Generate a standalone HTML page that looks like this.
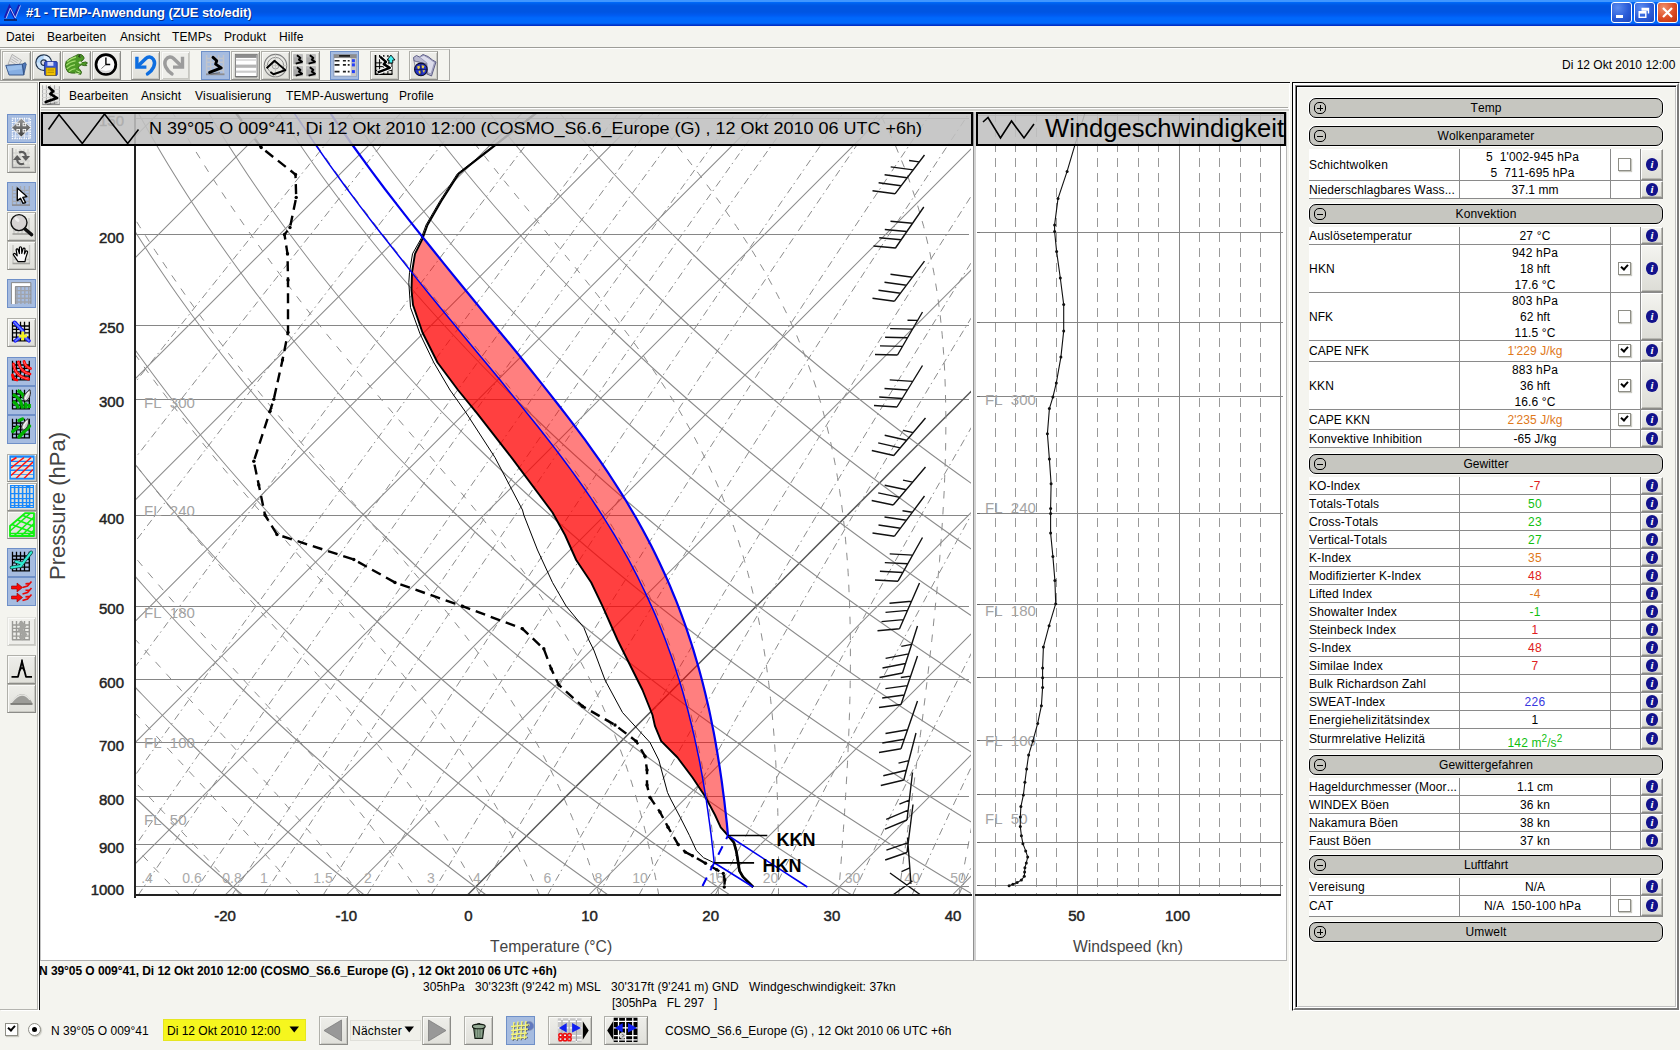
<!DOCTYPE html>
<html lang="de"><head><meta charset="utf-8"><title>#1 - TEMP-Anwendung (ZUE sto/edit)</title>
<style>
html,body{margin:0;padding:0;background:#f4f4ef;}
body{width:1680px;height:1050px;overflow:hidden;font-family:"Liberation Sans",sans-serif;font-size:12px;color:#000;font-kerning:none;}
#root{position:relative;width:1680px;height:1050px;background:#f4f4ef;overflow:hidden;}
.a{position:absolute;}
.t{position:absolute;white-space:nowrap;line-height:14px;}
#title{left:0;top:0;width:1680px;height:26px;background:linear-gradient(to bottom,#4096ff 0,#4096ff 1.5px,#0068f8 2.5px,#005ee9 4px,#0055e2 6px,#0055e2 12px,#005af0 15px,#0068fc 18px,#0068fc 23px,#0058e8 24px,#0030c8 25px,#0030c8 26px);}
#title .tt{left:26px;top:5px;color:#fff;font-weight:bold;font-size:13px;line-height:16px;text-shadow:1px 1px 0 #0a2a80;letter-spacing:-0.1px;}
.wb{position:absolute;top:2px;width:19px;height:19px;border:1px solid #fff;border-radius:3px;background:radial-gradient(circle at 30% 25%,#5c8cf0 0,#2a5cd8 55%,#1c46bc 100%);}
.wb.x{background:radial-gradient(circle at 30% 25%,#f0906c 0,#dc4c24 55%,#b83010 100%);}
#menubar{left:0;top:26px;width:1680px;height:21px;border-bottom:1px solid #9d9d98;}
.mi{position:absolute;top:4px;line-height:14px;font-size:12px;white-space:nowrap;letter-spacing:0.12px;}
.btn{position:absolute;width:27px;height:27px;border:1px solid;border-color:#b0b0aa #8c8c88 #8c8c88 #b0b0aa;background:linear-gradient(to bottom,#eeeeea,#e0e0da);box-shadow:inset 1px 1px 0 #fafaf8,inset -1px -1px 0 #c8c8c2;}
.btn.on{background:#a6bce0;border-color:#6f90c8;box-shadow:none;}
.btn.dis{border-color:#e4e4e0 #cfcfca #cfcfca #e4e4e0;background:#eeeeea;}
.btn svg{position:absolute;left:0;top:0;}
#tbframe{left:0;top:49px;width:448px;height:30px;border-top:1px solid #c4c4be;border-right:1px solid #a8a8a4;border-bottom:1px solid #a0a09c;border-left:1px solid #a8a8a4;}
#leftbar{left:0;top:82px;width:37px;height:926px;border-right:1px solid #b4b4b0;border-bottom:1px solid #b4b4b0;border-top:1px solid #b4b4b0;box-shadow:1px 1px 0 #fff;}
#main{left:39px;top:82px;width:1251px;height:928px;border-left:1px solid #111;border-top:1px solid #111;box-sizing:border-box;}
#innermenu{left:41px;top:84px;width:1247px;height:23px;border-bottom:1px solid #a8a8a4;}
#plot1{left:40px;top:112px;border-left:1px solid #c4c4c4;width:932px;height:848px;background:#fff;border-bottom:1px solid #b0b0b0;border-right:1px solid #909090;box-sizing:content-box;}
#plot2{left:974px;top:112px;width:310px;height:848px;background:#fff;border-bottom:1px solid #b0b0b0;border-right:1px solid #b8b8b8;border-left:2px solid #d2d2d2;box-sizing:content-box;}
/* right panel */
#rp{left:1292px;top:82px;width:388px;height:929px;box-sizing:border-box;border-top:1px solid #000;border-left:1px solid #000;border-right:1px solid #fff;border-bottom:1px solid #fff;}
#rp1{left:0;top:0;width:386px;height:927px;box-sizing:border-box;border-top:2px solid #fff;border-left:2px solid #fff;border-right:2px solid #7a7a7a;border-bottom:2px solid #7a7a7a;}
#rp2{left:0;top:0;width:382px;height:923px;box-sizing:border-box;border-top:1px solid #808080;border-left:1px solid #808080;border-right:1px solid #fff;border-bottom:1px solid #fff;}
#rp2b{left:0;top:0;width:380px;height:921px;box-sizing:border-box;border-top:1px solid #000;border-left:1px solid #000;}
#rp3{left:0;top:0;width:379px;height:920px;box-sizing:border-box;border-top:1px solid #fff;border-left:1px solid #fff;border-right:1px solid #c0c0c0;border-bottom:1px solid #c0c0c0;}
.sec{position:absolute;left:1309px;width:354px;height:20px;box-sizing:border-box;border:1px solid #000;border-radius:7px;background:#c6c6c0;box-shadow:0 0 0 1px #fff;text-align:center;line-height:19px;font-size:12px;}
.sec i{position:absolute;left:4px;top:3px;width:10px;height:10px;border:1px solid #000;border-radius:5px;}
.sec i:before{content:"";position:absolute;left:2px;top:4.5px;width:6px;height:1px;background:#000;}
.sec i.p:after{content:"";position:absolute;left:4.5px;top:2px;width:1px;height:6px;background:#000;}
.row{position:absolute;left:1309px;width:354px;background:#fff;border-bottom:1px solid #8a8a8a;box-sizing:border-box;}
.row .l{position:absolute;left:0;top:0;bottom:0;width:150px;border-right:1px solid #8a8a8a;white-space:nowrap;overflow:hidden;}
.row .l span{position:absolute;left:0;top:50%;margin-top:-7px;line-height:14px;}
.row .v{position:absolute;left:151px;top:0;bottom:0;width:150px;border-right:1px solid #8a8a8a;text-align:center;white-space:nowrap;}
.row .v span{display:block;line-height:16px;}
.row .c{position:absolute;left:302px;top:0;bottom:0;width:29px;border-right:1px solid #8a8a8a;}
.row .b{position:absolute;left:332px;top:0;bottom:0;width:22px;box-sizing:border-box;background:linear-gradient(to bottom,#f4f4f0,#dcdcd6);border:1px solid;border-color:#fff #8c8c88 #8c8c88 #fff;box-shadow:inset -1px -1px 0 #b8b8b2;}
.row .b:after{content:"";position:absolute;left:4px;top:50%;margin-top:-7px;width:12px;height:13px;border-radius:6px;background:#12128c;}
.row .b em{position:absolute;left:4px;top:50%;margin-top:-7px;width:12px;height:13px;z-index:2;color:#fff;font:italic bold 11px/13px "Liberation Serif",serif;text-align:center;}
.cb{position:absolute;width:11px;height:11px;border:1px solid #8e8e86;background:#fff;box-shadow:1px 1px 1px #c8c8c0;}
.cb.k:after{content:"";position:absolute;left:2px;top:1px;width:5px;height:3px;border-left:2px solid #000;border-bottom:2px solid #000;transform:rotate(-48deg);}
.or{color:#e0781a}.rd{color:#e02020}.gn{color:#10c010}.bl{color:#3838e0}

</style></head>
<body>
<div id="root">
<!-- title bar -->
<div id="title" class="a">
<svg class="a" style="left:2px;top:3px" width="22" height="20" viewBox="0 0 22 20"><path d="M3 15 L7.5 4 L12.5 14 L17.5 2" stroke="#1a1ab0" stroke-width="2.6" fill="none"/><path d="M4 15.5 L8.3 5 L13.3 15 L18.5 2.5" stroke="#c8d4ff" stroke-width="0.9" fill="none"/><path d="M2 17 H15" stroke="#101040" stroke-width="1.4"/></svg>
<div class="t tt">#1 - TEMP-Anwendung (ZUE sto/edit)</div>
<div class="wb" style="left:1611px"><svg width="19" height="19"><rect x="4" y="12" width="7" height="3" fill="#fff"/></svg></div>
<div class="wb" style="left:1634px"><svg width="19" height="19"><path d="M6.5 5.5 H13.5 V10.5 M6.5 7 H13.5" stroke="#fff" stroke-width="1.4" fill="none"/><rect x="4.2" y="8.7" width="6.6" height="5.6" stroke="#fff" stroke-width="1.4" fill="none"/><path d="M4.2 9.8 H10.8" stroke="#fff" stroke-width="1.6"/></svg></div>
<div class="wb x" style="left:1657px"><svg width="19" height="19"><path d="M5 5 L14 14 M14 5 L5 14" stroke="#fff" stroke-width="2.2" fill="none"/></svg></div>
</div>
<!-- menu bar -->
<div id="menubar" class="a">
<span class="mi" style="left:6px">Datei</span><span class="mi" style="left:47px">Bearbeiten</span><span class="mi" style="left:120px">Ansicht</span><span class="mi" style="left:172px">TEMPs</span><span class="mi" style="left:224px">Produkt</span><span class="mi" style="left:279px">Hilfe</span>
</div>
<div class="a" style="left:0;top:48px;width:1680px;height:1px;background:#fff"></div>
<!-- toolbar -->
<div id="tbframe" class="a"></div>
<div class="btn " style="left:2px;top:51px;width:27px;height:27px"><svg width="27" height="27" viewBox="0 0 27 27"><path d="M9.1 2.4 L18.5 8.4 L15.5 13.5 L5 12.3Z" fill="#e4e4e4" stroke="#9a9a9a" stroke-width="0.7"/><path d="M9.3 5 L15.5 9 M8.3 7 L14.5 11 M7.3 9 L13 12.6" stroke="#b4b4b4" stroke-width="0.9"/><path d="M19.25 12.1 L22.25 10.6 L23.2 12.3 L20.75 23Z" fill="#5078b8" stroke="#2c4c80" stroke-width="0.8"/><path d="M2.75 13.4 L19.25 12.1 L20.75 23 L6.1 23Z" fill="#86aee2" stroke="#2c4c80" stroke-width="0.9"/><path d="M4 14.4 L18.4 13.2 L19 17 L5 19Z" fill="#a4c6f0" opacity="0.7"/></svg></div>
<div class="btn " style="left:32px;top:51px;width:27px;height:27px"><svg width="27" height="27" viewBox="0 0 27 27"><circle cx="10.7" cy="10.6" r="7.8" fill="#b4d6f8" stroke="#22344c" stroke-width="1.3"/><path d="M10.7 3.4 A7.2 7.2 0 0 1 17.9 10.6 L10.7 10.6Z" fill="#e8f4ff" opacity="0.9"/><path d="M10.7 17.8 A7.2 7.2 0 0 1 3.5 10.6 L10.7 10.6Z" fill="#dcecfc" opacity="0.7"/><circle cx="10.7" cy="10.6" r="2.8" fill="#d8d8e0" stroke="#22344c" stroke-width="1.2"/><rect x="11.6" y="9.6" width="12.6" height="13.8" rx="1" fill="#3858d0" stroke="#1c2c90" stroke-width="0.9"/><rect x="14.4" y="9.9" width="6" height="3.9" fill="#d4d8fa"/><rect x="13" y="15.9" width="9.4" height="7.4" fill="#f2c200" stroke="#9a7800" stroke-width="0.6"/><path d="M14.5 18H21M14.5 20.3H21" stroke="#b08c00" stroke-width="1"/></svg></div>
<div class="btn " style="left:62px;top:51px;width:27px;height:27px"><svg width="27" height="27" viewBox="0 0 27 27"><polygon points="12.2,3.9 15.2,2.4 18.2,2.6 20.0,3.9 21.2,6.1 19.7,8.4 17.8,9.5 19.7,10.6 22.7,9.9 24.5,11.0 22.7,12.1 23.8,13.6 21.2,13.6 18.5,12.9 16.7,13.6 15.2,15.9 17.0,17.8 18.5,20.0 17.8,22.3 15.2,21.9 14.4,20.4 12.2,21.1 8.4,21.1 5.0,20.0 3.2,17.0 2.4,13.3 3.2,9.5 5.4,7.3 8.4,5.8" fill="#4e9a26" stroke="#2a5c0e" stroke-width="0.9" stroke-linejoin="round"/><path d="M4.2 9.5 C7 7 10 5.6 13 5 M3.4 13.2 C6 10.6 9 9.2 12.6 8.8 M3.8 16.8 C6.5 14.2 9 13 12 12.6 M6 19.4 C8 17.6 10 16.8 12.4 16.6" stroke="#a4dc70" stroke-width="1.3" fill="none"/><circle cx="16.8" cy="4.2" r="1.3" fill="#16300a"/><circle cx="17.2" cy="3.9" r="0.5" fill="#e8f8d0"/><ellipse cx="17.2" cy="10.6" rx="1.5" ry="1.2" fill="#e8f4d8"/><path d="M12 21 L16.4 21.8 M13.4 18.6 L17.4 20.4" stroke="#b8e890" stroke-width="1"/></svg></div>
<div class="btn " style="left:92px;top:51px;width:27px;height:27px"><svg width="27" height="27" viewBox="0 0 27 27"><circle cx="13.6" cy="13.2" r="10.4" fill="#000" opacity="0.35"/><circle cx="12.9" cy="12.5" r="9.9" fill="#fbfbfb" stroke="#000" stroke-width="2.7"/><path d="M5 16 A8.6 8.6 0 0 0 20.8 16 A12 12 0 0 1 5 16Z" fill="#d8d8d8"/><path d="M12.9 5.6 V12.5 H17.2" stroke="#000" stroke-width="1.4" fill="none"/><path d="M12.9 12.5 L8.4 16.6" stroke="#555" stroke-width="0.8"/></svg></div>
<div class="btn " style="left:131px;top:51px;width:27px;height:27px"><svg width="27" height="27" viewBox="0 0 27 27"><path d="M15.5 21.9 C21 18 24.4 12 21.4 7.4 C19.4 4.4 16 4.3 13.8 6.4 L6 14" stroke="#0e6ee0" stroke-width="3.5" fill="none" stroke-linecap="round"/><path d="M4.9 4.8 V15.1 H14.4" stroke="#0e6ee0" stroke-width="3.4" fill="none"/></svg></div>
<div class="btn dis" style="left:161px;top:51px;width:27px;height:27px"><svg width="27" height="27" viewBox="0 0 27 27"><path d="M9.9 21.9 C4.4 18 1 12 4 7.4 C6 4.4 9.4 4.3 11.6 6.4 L19.4 14" stroke="#9c9c9c" stroke-width="3.5" fill="none" stroke-linecap="round"/><path d="M20.5 4.8 V15.1 H11" stroke="#9c9c9c" stroke-width="3.4" fill="none"/></svg></div>
<div class="btn on" style="left:201px;top:51px;width:27px;height:27px"><svg width="27" height="27" viewBox="0 0 27 27"><path d="M4.6 3V22M8.75 3V22M12.9 3V22M16.6 3V22M21.5 3V22M4 6.5H22M4 10.25H22M4 14.4H22M4 18.5H22" stroke="#c0c4cc" stroke-width="1.5" fill="none"/><path d="M4 22.3H22.5" stroke="#8c8c90" stroke-width="1.8"/><path d="M11 5.4 L14.75 8.75 L13.6 12.1 L19.25 15.9 L7.6 20.4" stroke="#000" stroke-width="2.9" fill="none" stroke-linejoin="round" stroke-linecap="round"/><path d="M8.5 22 L18 20.6" stroke="#000" stroke-width="1.2" opacity="0.35"/></svg></div>
<div class="btn " style="left:231px;top:51px;width:27px;height:27px"><svg width="27" height="27" viewBox="0 0 27 27"><rect x="3.4" y="2.4" width="21.7" height="22.1" fill="#fff" stroke="#7c7c7c" stroke-width="1"/><rect x="3.9" y="2.9" width="20.7" height="3" fill="#8c8c8c"/><rect x="3.9" y="7.2" width="20.7" height="1.6" fill="#d8d8d8"/><rect x="3.9" y="12.6" width="20.7" height="3.2" fill="#b4b4b4"/><rect x="3.9" y="18.6" width="20.7" height="2.2" fill="#cccccc"/><path d="M3.4 25 H25.1" stroke="#6c6c6c" stroke-width="1"/></svg></div>
<div class="btn " style="left:261px;top:51px;width:27px;height:27px"><svg width="27" height="27" viewBox="0 0 27 27"><circle cx="13.5" cy="13.6" r="11.2" fill="none" stroke="#808080" stroke-width="1.1"/><circle cx="13.5" cy="13.6" r="8.2" fill="none" stroke="#8c8c8c" stroke-width="1"/><circle cx="13.5" cy="13.6" r="3.4" fill="none" stroke="#9c9c9c" stroke-width="1"/><path d="M13.5 2.5V24.7M2.4 13.6H24.6" stroke="#c4c4c0" stroke-width="0.9"/><path d="M4.6 16.25 L12.5 8.75 L23.4 18.1 L11.4 22.25 L8.4 20" fill="none" stroke="#000" stroke-width="1.9" stroke-linejoin="round"/></svg></div>
<div class="btn " style="left:291px;top:51px;width:27px;height:27px"><svg width="27" height="27" viewBox="0 0 27 27"><rect x="1.3" y="2.4" width="9.4" height="9.8" fill="#a8a8a8"/><rect x="1.3" y="2.4" width="9.4" height="3" fill="#bcbcbc"/><path d="M4.9 3.2 l3.4 2.6 l-1.4 1.8 l3.2 2.2 l-6.4 1.9" stroke="#000" stroke-width="1.9" fill="none" stroke-linejoin="round"/><rect x="14.2" y="2.4" width="9.4" height="9.8" fill="#a8a8a8"/><rect x="14.2" y="2.4" width="9.4" height="3" fill="#bcbcbc"/><path d="M17.8 3.2 l3.4 2.6 l-1.4 1.8 l3.2 2.2 l-6.4 1.9" stroke="#000" stroke-width="1.9" fill="none" stroke-linejoin="round"/><rect x="1.3" y="14.4" width="9.4" height="9.8" fill="#a8a8a8"/><rect x="1.3" y="14.4" width="9.4" height="3" fill="#bcbcbc"/><path d="M4.9 15.2 l3.4 2.6 l-1.4 1.8 l3.2 2.2 l-6.4 1.9" stroke="#000" stroke-width="1.9" fill="none" stroke-linejoin="round"/><rect x="14.2" y="14.4" width="9.4" height="9.8" fill="#a8a8a8"/><rect x="14.2" y="14.4" width="9.4" height="3" fill="#bcbcbc"/><path d="M17.8 15.2 l3.4 2.6 l-1.4 1.8 l3.2 2.2 l-6.4 1.9" stroke="#000" stroke-width="1.9" fill="none" stroke-linejoin="round"/></svg></div>
<div class="btn on" style="left:330px;top:51px;width:27px;height:27px"><svg width="27" height="27" viewBox="0 0 27 27"><rect x="2.9" y="2.4" width="22.5" height="21.7" fill="#fff" stroke="#8090b0" stroke-width="0.8"/><rect x="19.75" y="6" width="5.6" height="18" fill="#c8c8c8"/><rect x="2.9" y="2.4" width="22.5" height="3.7" fill="#8c8c8c"/><rect x="8.1" y="3.1" width="10.9" height="1.6" fill="#101010"/><path d="M3.6 8.75H8.5M11.9 8.75H14.9M16.75 8.75H18.6M3.6 12.9H8.5M11.9 12.9H14.9M16.75 12.9H18.6M3.6 19.6H8.5M11.9 19.6H14.9M16.75 19.6H18.6" stroke="#202020" stroke-width="1.7"/><rect x="20.9" y="7.2" width="3" height="3" fill="#2440f8"/><rect x="20.9" y="11.4" width="3" height="3" fill="#2440f8"/><rect x="20.9" y="18.1" width="3" height="3" fill="#2440f8"/></svg></div>
<div class="btn " style="left:370px;top:51px;width:27px;height:27px"><svg width="27" height="27" viewBox="0 0 27 27"><path d="M8.6 7V22M12.75 7V22M16.9 7V22M21 11V22M4.5 10.9H21M4.5 14.6H21M4.5 18.4H21" stroke="#000" stroke-width="1" fill="none"/><path d="M8.6 3V5M12.75 3V5M16.9 3V5" stroke="#000" stroke-width="1.2"/><path d="M4.5 3V22.25H21.5" stroke="#000" stroke-width="1.6" fill="none"/><path d="M9 4.6 L15 9.9 L12.75 12.1 L18.75 15.9 L6.75 20.4" stroke="#fff" stroke-width="4.6" fill="none" stroke-linejoin="round"/><path d="M9 4.6 L15 9.9 L12.75 12.1 L18.75 15.9 L6.75 20.4" stroke="#000" stroke-width="2.5" fill="none" stroke-linejoin="round"/><path d="M19.9 3.1 L24 8 H21.75 V11 H18 V8 H16.1Z" fill="#48f0f0" stroke="#000" stroke-width="0.9"/></svg></div>
<div class="btn " style="left:409px;top:51px;width:27px;height:27px"><svg width="27" height="27" viewBox="0 0 27 27"><path d="M3.5 5.5 L6.5 3.5 L9.5 5 L13 2.5 L18 4.5 L22.5 8 L26 10 L21.5 24 L17 22 L16.5 12 L4 9Z" fill="#b8b8d0" stroke="#50507c" stroke-width="0.9" stroke-linejoin="round"/><path d="M9.5 5 L14 3.4 L19 6.4 L24.5 10.4 L21 22 L17.4 20.5 L17 11Z" fill="#dcdcec" stroke="#7c7ca4" stroke-width="0.6"/><path d="M4 9 L16.5 12 L17 22 L5.5 17Z" fill="#e4e4e0" stroke="#6c6c8c" stroke-width="0.7"/><circle cx="10.9" cy="17.4" r="6.3" fill="#2434c8" stroke="#0c0c30" stroke-width="1.1"/><path d="M7 14.5 L9.5 13.5 L10 16 L8 17.5Z M11.5 13 L14.5 14 L13.5 16.5 L11.8 16Z M8.5 19 L10.5 18.5 L11 21.5 L9 21.5Z M12.5 18.5 L15 18 L14 21Z" fill="#ecd040"/><path d="M10.9 11.2V23.6M4.7 17.4H17.1" stroke="#0c0c30" stroke-width="0.6"/></svg></div>
<div class="t" style="left:1562px;top:58px;font-size:12px">Di 12 Okt 2010 12:00</div>
<!-- left bar -->
<div id="leftbar" class="a"></div>
<div class="btn on" style="left:7px;top:114px;width:27px;height:27px"><svg width="27" height="27" viewBox="0 0 27 27"><path d="M7.5 3V24M12 3V24M16.5 3V24M21 3V24M4 7.5H23M4 12H23M4 16.5H23M4 21H23" stroke="#dfe7f5" stroke-width="1.2"/><rect x="4.4" y="3.5" width="18" height="20" fill="none" stroke="#fff" stroke-width="1.3" stroke-dasharray="1.2 1.1"/><defs><linearGradient id="mvg" x1="0" y1="0" x2="0" y2="1"><stop offset="0" stop-color="#9a9a9a"/><stop offset="1" stop-color="#3c3c3c"/></linearGradient></defs><path d="M13.3 3.2 L22.7 12.6 L13.3 22 L3.9 12.6Z" fill="url(#mvg)" stroke="#f0f0f0" stroke-width="0.8"/><g fill="#7c7c7c" stroke="#fff" stroke-width="0.9"><rect x="8.9" y="8.2" width="2.6" height="2.6"/><rect x="15.1" y="8.2" width="2.6" height="2.6"/><rect x="8.9" y="14.4" width="2.6" height="2.6"/><rect x="15.1" y="14.4" width="2.6" height="2.6"/></g></svg></div>
<div class="btn " style="left:7px;top:143.5px;width:27px;height:27px"><svg width="27" height="27" viewBox="0 0 27 27"><path d="M8 4V22M12 4V22M16 4V22M20 4V22M5 8H22M5 12H22M5 16H22M5 20H22" stroke="#d6d6d2" stroke-width="1.3"/><path d="M4.5 3V22.5H22" stroke="#8c8c8c" stroke-width="1.4" fill="none"/><path d="M11 7.5 C14 6 17.5 7 17.8 11" stroke="#5c5c5c" stroke-width="2.2" fill="none"/><path d="M13.6 11 L22 11 L17.8 16Z" fill="#5c5c5c"/><path d="M16 18.5 C13 20 9.5 19 9.2 15" stroke="#5c5c5c" stroke-width="2.2" fill="none"/><path d="M13.4 15 L5 15 L9.2 10Z" fill="#5c5c5c"/></svg></div>
<div class="btn on" style="left:7px;top:182px;width:27px;height:27px"><svg width="27" height="27" viewBox="0 0 27 27"><path d="M4.5 3V22M8.5 3V22M12.5 3V22M16.5 3V22M21.3 3V22M4 7.3H22M4 10.7H22M4 14.1H22M4 18.4H22" stroke="#a4a8b0" stroke-width="1.3"/><path d="M4 22.1H22" stroke="#8c8c90" stroke-width="1.6"/><path d="M9.3 5 L9.3 17.6 L12.5 15.3 L15 20.4 L17.6 19.6 L14.8 14.4 L18.8 13.6Z" fill="#fff" stroke="#000" stroke-width="1.3" stroke-linejoin="round"/></svg></div>
<div class="btn " style="left:7px;top:211.5px;width:27px;height:27px"><svg width="27" height="27" viewBox="0 0 27 27"><path d="M6 13V21M10 16V21M14 16V21M18 8V21M21 5V21M5 17.5H21" stroke="#c8c8c4" stroke-width="1.4"/><path d="M4.5 21H21.5" stroke="#a0a09c" stroke-width="1.6"/><circle cx="11" cy="9.6" r="8" fill="#d4d0d0" fill-opacity="0.85" stroke="#111" stroke-width="1.4"/><ellipse cx="9" cy="6.5" rx="3" ry="1.6" fill="#fff" opacity="0.6" transform="rotate(40 9 6.5)"/><path d="M17 16 L23.6 21.6" stroke="#111" stroke-width="3.4" stroke-linecap="round"/></svg></div>
<div class="btn " style="left:7px;top:241px;width:27px;height:27px"><svg width="27" height="27" viewBox="0 0 27 27"><path d="M5 3V21M21.5 3V21M5 17.5H21" stroke="#c8c8c4" stroke-width="1.4"/><path d="M4.5 21.5H22" stroke="#a0a09c" stroke-width="1.6"/><path d="M10 19.6 L5.6 13.2 C4.8 12 6.4 10.8 7.4 11.9 L9.2 13.8 L8.2 8.2 C7.9 6.8 9.8 6.4 10.2 7.8 L11.4 11.6 L11.4 5.8 C11.4 4.4 13.4 4.4 13.5 5.8 L13.8 11.4 L15 6.8 C15.4 5.5 17.2 6 17 7.3 L16.4 12 L17.6 9.6 C18.3 8.4 19.9 9.1 19.5 10.5 L17.6 16.4 L17 19.6Z" fill="#f8f8f8" stroke="#000" stroke-width="1.2" stroke-linejoin="round"/></svg></div>
<div class="btn on" style="left:7px;top:279px;width:27px;height:27px"><svg width="27" height="27" viewBox="0 0 27 27"><path d="M9 7V24M12.9 7V24M16.8 7V24M20.7 7V24M7 10.6H23M7 14.4H23M7 18.2H23M7 22H23" stroke="#a0a4ac" stroke-width="1.4"/><rect x="3.9" y="3.1" width="18.4" height="3" fill="#fff"/><rect x="3.9" y="3.1" width="3.2" height="21" fill="#fff"/><path d="M3.4 24V2.6H22.9V24" stroke="#8c8c8c" stroke-width="1" fill="none"/><path d="M7.4 6.6H22.6M7.4 6.6V24" stroke="#8c8c8c" stroke-width="1" fill="none"/></svg></div>
<div class="btn " style="left:7px;top:318px;width:27px;height:27px"><svg width="27" height="27" viewBox="0 0 27 27"><rect x="4.5" y="6" width="16.8" height="15.8" fill="#e6e6e2"/><path d="M4.5 2.7V22.4M8.5 2.7V22M12.5 2.7V22M16.5 2.7V22M21.3 2.7V22.4M4 7H21.8M4 10.4H21.8M4 13.8H21.8M4 18.1H21.8M3.9 21.8H21.9" stroke="#000" stroke-width="1.3" fill="none"/><path d="M6.5 3.3 L14.8 12.1 L14.8 16 L7.3 21.8 M14.8 16 L21 21.8" stroke="#1010ff" stroke-width="3.6" fill="none" stroke-linecap="round" stroke-linejoin="round"/><path d="M6.5 3.3 L14.8 12.1 L14.8 16 L7.3 21.8 M14.8 16 L21 21.8" stroke="#6a86ff" stroke-width="1.6" fill="none" stroke-linecap="round" stroke-linejoin="round"/><path d="M14.8 12.6V21.2M10.6 17H19" stroke="#f2f020" stroke-width="3"/></svg></div>
<div class="btn on" style="left:7px;top:357px;width:27px;height:27px"><svg width="27" height="27" viewBox="0 0 27 27"><path d="M4.5 2.7V22.4M8.5 2.7V22M12.5 2.7V22M16.5 2.7V22M21.3 2.7V22.4M4 7H21.8M4 10.4H21.8M4 13.8H21.8M4 18.1H21.8M3.9 21.8H21.9" stroke="#000" stroke-width="1.3" fill="none"/><path d="M5.5 6 C6.5 14 11 19.5 20.5 21 M10.5 4 C11.5 10 15 14.5 22 16 M16 3.5 C17 7 19 9.5 22.5 10.5 M4.5 17 C5 20 6.5 21.5 9 22" stroke="#ff0000" stroke-width="2.8" fill="none" stroke-linecap="round"/><path d="M5.5 6 C6.5 14 11 19.5 20.5 21 M10.5 4 C11.5 10 15 14.5 22 16 M16 3.5 C17 7 19 9.5 22.5 10.5" stroke="#ff7070" stroke-width="0.9" fill="none"/></svg></div>
<div class="btn on" style="left:7px;top:386px;width:27px;height:27px"><svg width="27" height="27" viewBox="0 0 27 27"><path d="M4.5 2.7V22.4M8.5 2.7V22M12.5 2.7V22M16.5 2.7V22M21.3 2.7V22.4M4 7H21.8M4 10.4H21.8M4 13.8H21.8M4 18.1H21.8M3.9 21.8H21.9" stroke="#000" stroke-width="1.3" fill="none"/><path d="M9.5 3.5 C13 5 15.5 8 16 12 M4.8 7.5 C10 9.5 13.5 14 14.5 21.5 M4.8 14.5 C8 16 9.8 18.5 10.3 21.5 M17.8 15.5 V21.5 M21.3 17 V21" stroke="#00b000" stroke-width="3.2" fill="none"/><path d="M21.9 2.7 C23.5 7 21.5 12 17.8 14 C15.2 13.5 15 10.5 16.6 8 C18 5.8 20 4 21.9 2.7Z" fill="#d0d0d0" stroke="#303030" stroke-width="1"/><path d="M20.8 5 C19 7 17.5 9.5 17.4 12" stroke="#fff" stroke-width="1.1" fill="none"/></svg></div>
<div class="btn on" style="left:7px;top:415px;width:27px;height:27px"><svg width="27" height="27" viewBox="0 0 27 27"><path d="M4.5 2.7V22.4M8.5 2.7V22M12.5 2.7V22M16.5 2.7V22M21.3 2.7V22.4M4 7H21.8M4 10.4H21.8M4 13.8H21.8M4 18.1H21.8M3.9 21.8H21.9" stroke="#000" stroke-width="1.3" fill="none"/><path d="M4.8 15.5 L9.5 11 M11 4.5 L14.5 3 M11 21 L21.5 10" stroke="#00b000" stroke-width="3.4" fill="none" stroke-linecap="round"/><path d="M20 2.6 C21.6 7 19.6 12 15.9 14 C13.3 13.5 13.1 10.5 14.7 8 C16.1 5.8 18.1 4 20 2.6Z" fill="#d0d0d0" stroke="#303030" stroke-width="1"/><path d="M18.9 5 C17.1 7 15.6 9.5 15.5 12" stroke="#fff" stroke-width="1.1" fill="none"/></svg></div>
<div class="btn " style="left:7px;top:454px;width:28px;height:26px"><svg width="28" height="26" viewBox="0 0 28 26"><rect x="2" y="1" width="24" height="23" fill="#1888fc"/><path d="M3 4.2H25M3 8.6H25M3 13H25M3 17.4H25M3 21.3H25" stroke="#e6e4dc" stroke-width="3"/><path d="M3 6 L8.5 2.5 M3 13 L16 2.5 M3 20.5 L23 2.5 M8 23.5 L25 7 M16 23.5 L25 14.5" stroke="#ff1010" stroke-width="1.5"/><rect x="2" y="1" width="24" height="23" fill="none" stroke="#1888fc" stroke-width="1.2"/></svg></div>
<div class="btn " style="left:7px;top:482.5px;width:28px;height:26px"><svg width="28" height="26" viewBox="0 0 28 26"><rect x="2" y="1" width="24" height="23" fill="#1888fc"/><g fill="#e8e4d8"><rect x="3.4" y="4" width="2.4" height="5"/><rect x="7.4" y="4" width="2.4" height="5"/><rect x="11.4" y="4" width="2.4" height="5"/><rect x="15.4" y="4" width="2.4" height="5"/><rect x="19.2" y="4" width="1.6" height="5"/><rect x="22.4" y="4" width="2.4" height="5"/><rect x="3.4" y="10.2" width="2.4" height="3.8"/><rect x="7.4" y="10.2" width="2.4" height="3.8"/><rect x="11.4" y="10.2" width="2.4" height="3.8"/><rect x="15.4" y="10.2" width="2.4" height="3.8"/><rect x="19.2" y="10.2" width="1.6" height="3.8"/><rect x="22.4" y="10.2" width="2.4" height="3.8"/><rect x="3.4" y="15.2" width="2.4" height="2.8"/><rect x="7.4" y="15.2" width="2.4" height="2.8"/><rect x="11.4" y="15.2" width="2.4" height="2.8"/><rect x="15.4" y="15.2" width="2.4" height="2.8"/><rect x="19.2" y="15.2" width="1.6" height="2.8"/><rect x="22.4" y="15.2" width="2.4" height="2.8"/><rect x="3.4" y="19.2" width="2.4" height="1.8"/><rect x="7.4" y="19.2" width="2.4" height="1.8"/><rect x="11.4" y="19.2" width="2.4" height="1.8"/><rect x="15.4" y="19.2" width="2.4" height="1.8"/><rect x="19.2" y="19.2" width="1.6" height="1.8"/><rect x="22.4" y="19.2" width="2.4" height="1.8"/><rect x="3.4" y="2" width="2.4" height="0.9"/><rect x="7.4" y="2" width="2.4" height="0.9"/><rect x="11.4" y="2" width="2.4" height="0.9"/><rect x="15.4" y="2" width="2.4" height="0.9"/><rect x="22.4" y="2" width="2.4" height="0.9"/><rect x="3.4" y="22" width="2.4" height="0.9"/><rect x="7.4" y="22" width="2.4" height="0.9"/><rect x="11.4" y="22" width="2.4" height="0.9"/><rect x="15.4" y="22" width="2.4" height="0.9"/><rect x="22.4" y="22" width="2.4" height="0.9"/></g></svg></div>
<div class="btn " style="left:7px;top:510.5px;width:28px;height:26px"><svg width="28" height="26" viewBox="0 0 28 26"><path d="M2 24 L2 14 L17 1.2 L26 1.2 L26 24Z" fill="#e2e2de" stroke="#10f010" stroke-width="1.8" stroke-linejoin="round"/><path d="M2 19 L22 1.5 M6 24 L26 5 M13 24 L26 11.5 M20 24 L26 18 M4 12.5 L26 21 M9.5 8 L26 14.5 M15 3.5 L26 8 M2 21.5 H26" stroke="#10f010" stroke-width="1.6" fill="none"/></svg></div>
<div class="btn on" style="left:7px;top:548px;width:27px;height:27px"><svg width="27" height="27" viewBox="0 0 27 27"><path d="M4.5 2.7V22.4M8.5 2.7V22M12.5 2.7V22M16.5 2.7V22M21.3 2.7V22.4M4 7H21.8M4 10.4H21.8M4 13.8H21.8M4 18.1H21.8M3.9 21.8H21.9" stroke="#000" stroke-width="1.3" fill="none"/><path d="M23.2 3.4 L12.6 17 M14.4 14.6 L8 12.6 M12.6 17 L3.5 18.5" stroke="#104840" stroke-width="3.6" fill="none" stroke-linecap="round"/><path d="M23.2 3.4 L12.6 17 M14.4 14.6 L8 12.6 M12.6 17 L3.5 18.5" stroke="#30ecd4" stroke-width="2.2" fill="none" stroke-linecap="round"/></svg></div>
<div class="btn on" style="left:7px;top:577px;width:27px;height:27px"><svg width="27" height="27" viewBox="0 0 27 27"><path d="M3.5 8 H9 V5 L14.5 9.5 L9 14 V11 H3.5Z M3.5 18 H9 V15 L14.5 19.5 L9 24 V21 H3.5Z" fill="#f80808" stroke="#900000" stroke-width="0.6"/><path d="M23.5 3.5 L19.5 8 L14.5 9.5 M21.8 5.4 L17.5 5.8 M23.5 10 L19.5 14.5 L14.5 16 M21.8 12 L17.5 12.4 M23.5 16.5 L19.5 21 L14.5 22.5 M21.8 18.4 L17.5 18.8" stroke="#e80808" stroke-width="1.7" fill="none"/></svg></div>
<div class="btn dis" style="left:7px;top:616.5px;width:27px;height:27px"><svg width="27" height="27" viewBox="0 0 27 27"><path d="M4.5 3V22M8.5 3V22M12.5 3V22M16.5 3V22M21.3 3V22M4 7H22M4 10.4H22M4 13.8H22M4 18.1H22M4 21.8H22" stroke="#9a9a96" stroke-width="1.4"/><path d="M12 4 L15.5 8 L12.5 12 L16.5 16.5 L12.5 21" stroke="#a4a4a0" stroke-width="4.4" fill="none"/></svg></div>
<div class="btn " style="left:7px;top:655px;width:27px;height:27px"><svg width="27" height="27" viewBox="0 0 27 27"><path d="M3.5 20.8 H10 L14 5.5 L18 20.8 H24" stroke="#000" stroke-width="1.8" fill="none" stroke-linejoin="round"/><path d="M11.2 15 L14 11.5 L16.8 15" stroke="#000" stroke-width="1.3" fill="none"/><path d="M14 3.5 V9" stroke="#000" stroke-width="1.7"/></svg></div>
<div class="btn " style="left:7px;top:684px;width:27px;height:27px"><svg width="27" height="27" viewBox="0 0 27 27"><path d="M2.5 18.5 C6 13 10 9 14 9 C18 9 22 13 24.5 18.5 Z" fill="#9c9c98"/><path d="M3 18 C6 14 10 10 14 10 C17 10 20 12 22 15" stroke="#e4e4e0" stroke-width="1.3" fill="none"/><path d="M2.5 19 H24.5" stroke="#6c6c68" stroke-width="1.6"/></svg></div>
<!-- main panel -->
<div id="main" class="a"></div>
<div class="a" style="left:41px;top:83px;width:1248px;height:1px;background:#fff"></div>
<div class="a" style="left:1289px;top:83px;width:1px;height:927px;background:#fff"></div>
<div id="innermenu" class="a"></div>
<div class="a" style="left:41px;top:108px;width:1248px;height:1px;background:#fff"></div>
<div class="a" style="left:41px;top:109px;width:1248px;height:2px;background:#d4d4d0"></div>
<svg class="a" style="left:42px;top:85px" width="19" height="21" viewBox="0 0 19 21"><rect x="0.3" y="1" width="17.4" height="18.6" fill="#ececea"/><path d="M0.5 0.3V19.6M4.4 0.3V19.6M8.4 0.3V19.6M12.5 0.3V19.6M17.4 1.2V19.6" stroke="#aeaeae" stroke-width="1.1"/><path d="M0.3 4.5H17.6M0.3 8.5H17.6M0.3 12.5H17.6M0.3 16.5H17.6" stroke="#d4d4d2" stroke-width="1.2"/><path d="M0.3 19.5H17.8" stroke="#8c8c8c" stroke-width="1.3"/><path d="M5 19.3 L15.6 17.6" stroke="#000" stroke-width="1.4" opacity="0.3"/><path d="M7.1 2.4 L11.3 6.2 L8.3 8.9 L15.1 13.1 L3.7 17.1" stroke="#000" stroke-width="2.6" fill="none" stroke-linejoin="round" stroke-linecap="round"/></svg>
<span class="t" style="left:69px;top:89px;letter-spacing:0.12px">Bearbeiten</span><span class="t" style="left:141px;top:89px;letter-spacing:0.12px">Ansicht</span><span class="t" style="left:195px;top:89px;letter-spacing:0.12px">Visualisierung</span><span class="t" style="left:286px;top:89px;letter-spacing:0.12px">TEMP-Auswertung</span><span class="t" style="left:399px;top:89px;letter-spacing:0.12px">Profile</span>
<div id="plot1" class="a"></div>
<div id="plot2" class="a"></div>
<svg width="1680" height="1050" viewBox="0 0 1680 1050" style="position:absolute;left:0;top:0;font-kerning:none" font-family='"Liberation Sans", sans-serif'>
<defs><clipPath id="cc"><rect x="136" y="113" width="835" height="782"/></clipPath><clipPath id="cw"><rect x="977" y="113" width="309" height="782"/></clipPath></defs>
<g clip-path="url(#cc)">
<path d="M136 118.5 H969" stroke="#868686" stroke-width="1" fill="none"/>
<path d="M136 234.5 H969" stroke="#868686" stroke-width="1" fill="none"/>
<path d="M136 325.5 H969" stroke="#868686" stroke-width="1" fill="none"/>
<path d="M136 399.5 H969" stroke="#868686" stroke-width="1" fill="none"/>
<path d="M136 515.5 H969" stroke="#868686" stroke-width="1" fill="none"/>
<path d="M136 606.5 H969" stroke="#868686" stroke-width="1" fill="none"/>
<path d="M136 679.5 H969" stroke="#868686" stroke-width="1" fill="none"/>
<path d="M136 742.5 H969" stroke="#868686" stroke-width="1" fill="none"/>
<path d="M136 796.5 H969" stroke="#868686" stroke-width="1" fill="none"/>
<path d="M136 844.5 H969" stroke="#868686" stroke-width="1" fill="none"/>
<path d="M136 886.5 H969" stroke="#868686" stroke-width="1" fill="none"/>
<path d="M-1108.1 895 L-313.1 100 M-986.9 895 L-191.9 100 M-865.7 895 L-70.7 100 M-744.5 895 L50.5 100 M-623.3 895 L171.7 100 M-502.1 895 L292.9 100 M-380.9 895 L414.1 100 M-259.7 895 L535.3 100 M-138.5 895 L656.5 100 M-17.3 895 L777.7 100 M103.9 895 L898.9 100 M225.1 895 L1020.1 100 M346.3 895 L1141.3 100 M588.7 895 L1383.7 100 M709.9 895 L1504.9 100 M831.1 895 L1626.1 100 M952.3 895 L1747.3 100" stroke="#8c8c8c" stroke-width="1.05" fill="none"/>
<path d="M467.5 895 L1262.5 100" stroke="#555" stroke-width="1.5" fill="none"/>
<path d="M-1.3 895 L-11.3 885 L-21.1 875 L-30.8 865 L-40.3 855 L-49.7 845 L-59 835 L-68.1 825 L-77.1 815 L-86 805 L-94.7 795 L-103.3 785 L-111.8 775 L-120.2 765 L-128.4 755 L-136.5 745 L-144.4 735 L-152.2 725 L-160 715 L-167.5 705 L-175 695 L-182.3 685 L-189.5 675 L-196.6 665 L-203.6 655 L-210.5 645 L-217.2 635 L-223.8 625 L-230.3 615 L-236.7 605 L-243 595 L-249.1 585 L-255.2 575 L-261.1 565 L-266.9 555 L-272.6 545 L-278.2 535 L-283.7 525 L-289.1 515 L-294.4 505 L-299.5 495 L-304.6 485 L-309.5 475 L-314.4 465 L-319.1 455 L-323.8 445 L-328.3 435 L-332.7 425 L-337.1 415 L-341.3 405 L-345.4 395 L-349.5 385 L-353.4 375 L-357.2 365 L-361 355 L-364.6 345 L-368.2 335 L-371.6 325 L-375 315 L-378.2 305 L-381.4 295 L-384.5 285 L-387.5 275 L-390.4 265 L-393.2 255 L-395.9 245 L-398.5 235 L-401 225 L-403.5 215 L-405.8 205 L-408.1 195 L-410.3 185 L-412.4 175 L-414.4 165 L-416.4 155 L-418.2 145 L-420 135 L-421.6 125 L-423.2 115 L-424.8 105 L-426.2 95 M120.6 895 L109.7 885 L99.1 875 L88.6 865 L78.2 855 L67.9 845 L57.8 835 L47.9 825 L38.1 815 L28.4 805 L18.8 795 L9.4 785 L0.2 775 L-8.9 765 L-17.9 755 L-26.8 745 L-35.5 735 L-44.1 725 L-52.6 715 L-60.9 705 L-69.1 695 L-77.2 685 L-85.2 675 L-93 665 L-100.7 655 L-108.3 645 L-115.7 635 L-123.1 625 L-130.3 615 L-137.4 605 L-144.3 595 L-151.2 585 L-157.9 575 L-164.5 565 L-171 555 L-177.4 545 L-183.7 535 L-189.8 525 L-195.9 515 L-201.8 505 L-207.6 495 L-213.3 485 L-218.9 475 L-224.4 465 L-229.8 455 L-235 445 L-240.2 435 L-245.2 425 L-250.2 415 L-255 405 L-259.8 395 L-264.4 385 L-268.9 375 L-273.3 365 L-277.7 355 L-281.9 345 L-286 335 L-290.1 325 L-294 315 L-297.8 305 L-301.6 295 L-305.2 285 L-308.7 275 L-312.2 265 L-315.5 255 L-318.8 245 L-322 235 L-325 225 L-328 215 L-330.9 205 L-333.7 195 L-336.4 185 L-339 175 L-341.6 165 L-344 155 L-346.4 145 L-348.6 135 L-350.8 125 L-352.9 115 L-354.9 105 L-356.9 95 M242.5 895 L230.8 885 L219.3 875 L207.9 865 L196.7 855 L185.6 845 L174.7 835 L163.9 825 L153.3 815 L142.8 805 L132.4 795 L122.2 785 L112.2 775 L102.3 765 L92.5 755 L82.9 745 L73.4 735 L64 725 L54.8 715 L45.7 705 L36.7 695 L27.9 685 L19.2 675 L10.6 665 L2.2 655 L-6.1 645 L-14.3 635 L-22.3 625 L-30.2 615 L-38 605 L-45.7 595 L-53.2 585 L-60.6 575 L-67.9 565 L-75.1 555 L-82.2 545 L-89.1 535 L-95.9 525 L-102.6 515 L-109.2 505 L-115.7 495 L-122 485 L-128.2 475 L-134.4 465 L-140.4 455 L-146.3 445 L-152 435 L-157.7 425 L-163.3 415 L-168.7 405 L-174.1 395 L-179.3 385 L-184.4 375 L-189.5 365 L-194.4 355 L-199.2 345 L-203.9 335 L-208.5 325 L-213 315 L-217.4 305 L-221.7 295 L-225.9 285 L-230 275 L-234 265 L-237.9 255 L-241.7 245 L-245.4 235 L-249 225 L-252.5 215 L-256 205 L-259.3 195 L-262.5 185 L-265.7 175 L-268.7 165 L-271.7 155 L-274.5 145 L-277.3 135 L-280 125 L-282.6 115 L-285.1 105 L-287.5 95 M364.3 895 L351.8 885 L339.4 875 L327.2 865 L315.2 855 L303.3 845 L291.5 835 L279.9 825 L268.5 815 L257.2 805 L246 795 L235 785 L224.2 775 L213.5 765 L202.9 755 L192.5 745 L182.2 735 L172.1 725 L162.1 715 L152.3 705 L142.6 695 L133 685 L123.6 675 L114.3 665 L105.1 655 L96.1 645 L87.2 635 L78.5 625 L69.8 615 L61.3 605 L53 595 L44.7 585 L36.6 575 L28.7 565 L20.8 555 L13.1 545 L5.5 535 L-2 525 L-9.4 515 L-16.6 505 L-23.7 495 L-30.7 485 L-37.6 475 L-44.3 465 L-51 455 L-57.5 445 L-63.9 435 L-70.2 425 L-76.4 415 L-82.4 405 L-88.4 395 L-94.2 385 L-100 375 L-105.6 365 L-111.1 355 L-116.5 345 L-121.8 335 L-126.9 325 L-132 315 L-137 305 L-141.9 295 L-146.6 285 L-151.3 275 L-155.8 265 L-160.3 255 L-164.6 245 L-168.9 235 L-173 225 L-177.1 215 L-181 205 L-184.9 195 L-188.6 185 L-192.3 175 L-195.8 165 L-199.3 155 L-202.7 145 L-206 135 L-209.2 125 L-212.2 115 L-215.2 105 L-218.2 95 M486.2 895 L472.8 885 L459.6 875 L446.6 865 L433.7 855 L420.9 845 L408.3 835 L395.9 825 L383.7 815 L371.6 805 L359.6 795 L347.8 785 L336.2 775 L324.7 765 L313.4 755 L302.2 745 L291.1 735 L280.2 725 L269.5 715 L258.9 705 L248.4 695 L238.1 685 L228 675 L217.9 665 L208 655 L198.3 645 L188.7 635 L179.2 625 L169.9 615 L160.7 605 L151.6 595 L142.7 585 L133.9 575 L125.2 565 L116.7 555 L108.3 545 L100 535 L91.9 525 L83.9 515 L76 505 L68.2 495 L60.6 485 L53.1 475 L45.7 465 L38.4 455 L31.2 445 L24.2 435 L17.3 425 L10.5 415 L3.8 405 L-2.7 395 L-9.2 385 L-15.5 375 L-21.7 365 L-27.8 355 L-33.8 345 L-39.6 335 L-45.4 325 L-51 315 L-56.6 305 L-62 295 L-67.3 285 L-72.5 275 L-77.6 265 L-82.6 255 L-87.5 245 L-92.3 235 L-97 225 L-101.6 215 L-106.1 205 L-110.5 195 L-114.7 185 L-118.9 175 L-123 165 L-127 155 L-130.9 145 L-134.6 135 L-138.3 125 L-141.9 115 L-145.4 105 L-148.8 95 M608.1 895 L593.9 885 L579.8 875 L565.9 865 L552.2 855 L538.6 845 L525.2 835 L511.9 825 L498.9 815 L486 805 L473.2 795 L460.6 785 L448.2 775 L435.9 765 L423.8 755 L411.8 745 L400 735 L388.4 725 L376.9 715 L365.5 705 L354.3 695 L343.2 685 L332.3 675 L321.6 665 L311 655 L300.5 645 L290.2 635 L280 625 L269.9 615 L260 605 L250.3 595 L240.7 585 L231.2 575 L221.8 565 L212.6 555 L203.5 545 L194.6 535 L185.8 525 L177.1 515 L168.6 505 L160.2 495 L151.9 485 L143.7 475 L135.7 465 L127.8 455 L120 445 L112.3 435 L104.8 425 L97.4 415 L90.1 405 L83 395 L75.9 385 L69 375 L62.2 365 L55.5 355 L49 345 L42.5 335 L36.2 325 L29.9 315 L23.8 305 L17.8 295 L12 285 L6.2 275 L0.5 265 L-5 255 L-10.5 245 L-15.8 235 L-21 225 L-26.1 215 L-31.1 205 L-36 195 L-40.8 185 L-45.5 175 L-50.1 165 L-54.6 155 L-59 145 L-63.3 135 L-67.5 125 L-71.6 115 L-75.6 105 L-79.5 95 M730 895 L714.9 885 L700 875 L685.2 865 L670.7 855 L656.3 845 L642 835 L628 825 L614.1 815 L600.4 805 L586.8 795 L573.4 785 L560.2 775 L547.1 765 L534.2 755 L521.5 745 L508.9 735 L496.5 725 L484.2 715 L472.1 705 L460.2 695 L448.4 685 L436.7 675 L425.2 665 L413.9 655 L402.7 645 L391.6 635 L380.7 625 L370 615 L359.4 605 L348.9 595 L338.6 585 L328.4 575 L318.4 565 L308.5 555 L298.8 545 L289.2 535 L279.7 525 L270.4 515 L261.2 505 L252.1 495 L243.2 485 L234.4 475 L225.7 465 L217.2 455 L208.8 445 L200.5 435 L192.3 425 L184.3 415 L176.4 405 L168.6 395 L161 385 L153.5 375 L146.1 365 L138.8 355 L131.7 345 L124.6 335 L117.7 325 L110.9 315 L104.2 305 L97.7 295 L91.2 285 L84.9 275 L78.7 265 L72.6 255 L66.6 245 L60.8 235 L55 225 L49.3 215 L43.8 205 L38.4 195 L33 185 L27.8 175 L22.7 165 L17.7 155 L12.8 145 L8 135 L3.3 125 L-1.2 115 L-5.7 105 L-10.1 95 M851.9 895 L835.9 885 L820.2 875 L804.6 865 L789.1 855 L773.9 845 L758.9 835 L744 825 L729.3 815 L714.7 805 L700.4 795 L686.2 785 L672.2 775 L658.3 765 L644.6 755 L631.1 745 L617.8 735 L604.6 725 L591.6 715 L578.7 705 L566 695 L553.5 685 L541.1 675 L528.9 665 L516.8 655 L504.9 645 L493.1 635 L481.5 625 L470 615 L458.7 605 L447.6 595 L436.6 585 L425.7 575 L415 565 L404.4 555 L394 545 L383.7 535 L373.6 525 L363.6 515 L353.7 505 L344 495 L334.5 485 L325 475 L315.7 465 L306.5 455 L297.5 445 L288.6 435 L279.8 425 L271.2 415 L262.7 405 L254.3 395 L246.1 385 L238 375 L230 365 L222.1 355 L214.4 345 L206.8 335 L199.3 325 L191.9 315 L184.7 305 L177.5 295 L170.5 285 L163.7 275 L156.9 265 L150.2 255 L143.7 245 L137.3 235 L131 225 L124.8 215 L118.7 205 L112.8 195 L106.9 185 L101.2 175 L95.6 165 L90.1 155 L84.7 145 L79.4 135 L74.2 125 L69.1 115 L64.1 105 L59.2 95 M973.8 895 L957 885 L940.3 875 L923.9 865 L907.6 855 L891.6 845 L875.7 835 L860 825 L844.5 815 L829.1 805 L814 795 L799 785 L784.2 775 L769.5 765 L755.1 755 L740.8 745 L726.7 735 L712.7 725 L698.9 715 L685.3 705 L671.9 695 L658.6 685 L645.5 675 L632.5 665 L619.7 655 L607.1 645 L594.6 635 L582.3 625 L570.1 615 L558.1 605 L546.2 595 L534.5 585 L523 575 L511.6 565 L500.3 555 L489.3 545 L478.3 535 L467.5 525 L456.8 515 L446.3 505 L436 495 L425.7 485 L415.7 475 L405.7 465 L395.9 455 L386.3 445 L376.7 435 L367.4 425 L358.1 415 L349 405 L340 395 L331.2 385 L322.4 375 L313.9 365 L305.4 355 L297.1 345 L288.9 335 L280.8 325 L272.9 315 L265.1 305 L257.4 295 L249.8 285 L242.4 275 L235.1 265 L227.9 255 L220.8 245 L213.8 235 L207 225 L200.3 215 L193.7 205 L187.2 195 L180.8 185 L174.6 175 L168.4 165 L162.4 155 L156.5 145 L150.7 135 L145 125 L139.4 115 L134 105 L128.6 95 M1095.6 895 L1078 885 L1060.5 875 L1043.2 865 L1026.1 855 L1009.2 845 L992.5 835 L976 825 L959.7 815 L943.5 805 L927.6 795 L911.8 785 L896.2 775 L880.8 765 L865.5 755 L850.4 745 L835.6 735 L820.8 725 L806.3 715 L791.9 705 L777.7 695 L763.7 685 L749.8 675 L736.1 665 L722.6 655 L709.3 645 L696.1 635 L683 625 L670.2 615 L657.4 605 L644.9 595 L632.5 585 L620.3 575 L608.2 565 L596.3 555 L584.5 545 L572.9 535 L561.4 525 L550.1 515 L538.9 505 L527.9 495 L517 485 L506.3 475 L495.7 465 L485.3 455 L475 445 L464.9 435 L454.9 425 L445 415 L435.3 405 L425.7 395 L416.2 385 L406.9 375 L397.8 365 L388.7 355 L379.8 345 L371 335 L362.4 325 L353.9 315 L345.5 305 L337.2 295 L329.1 285 L321.1 275 L313.2 265 L305.5 255 L297.9 245 L290.4 235 L283 225 L275.8 215 L268.6 205 L261.6 195 L254.7 185 L247.9 175 L241.3 165 L234.8 155 L228.3 145 L222 135 L215.8 125 L209.8 115 L203.8 105 L197.9 95 M1217.5 895 L1199 885 L1180.7 875 L1162.6 865 L1144.6 855 L1126.9 845 L1109.4 835 L1092 825 L1074.9 815 L1057.9 805 L1041.2 795 L1024.6 785 L1008.2 775 L992 765 L975.9 755 L960.1 745 L944.4 735 L929 725 L913.7 715 L898.5 705 L883.6 695 L868.8 685 L854.2 675 L839.8 665 L825.5 655 L811.5 645 L797.5 635 L783.8 625 L770.2 615 L756.8 605 L743.5 595 L730.5 585 L717.5 575 L704.8 565 L692.2 555 L679.7 545 L667.4 535 L655.3 525 L643.3 515 L631.5 505 L619.8 495 L608.3 485 L597 475 L585.8 465 L574.7 455 L563.8 445 L553 435 L542.4 425 L531.9 415 L521.6 405 L511.4 395 L501.3 385 L491.4 375 L481.6 365 L472 355 L462.5 345 L453.2 335 L443.9 325 L434.9 315 L425.9 305 L417.1 295 L408.4 285 L399.8 275 L391.4 265 L383.1 255 L375 245 L366.9 235 L359 225 L351.2 215 L343.6 205 L336 195 L328.6 185 L321.3 175 L314.1 165 L307.1 155 L300.2 145 L293.4 135 L286.7 125 L280.1 115 L273.6 105 L267.3 95 M1339.4 895 L1320 885 L1300.9 875 L1281.9 865 L1263.1 855 L1244.6 845 L1226.2 835 L1208 825 L1190.1 815 L1172.3 805 L1154.7 795 L1137.4 785 L1120.2 775 L1103.2 765 L1086.4 755 L1069.8 745 L1053.3 735 L1037.1 725 L1021 715 L1005.1 705 L989.4 695 L973.9 685 L958.6 675 L943.4 665 L928.4 655 L913.6 645 L899 635 L884.6 625 L870.3 615 L856.1 605 L842.2 595 L828.4 585 L814.8 575 L801.4 565 L788.1 555 L775 545 L762 535 L749.2 525 L736.6 515 L724.1 505 L711.8 495 L699.6 485 L687.6 475 L675.8 465 L664.1 455 L652.5 445 L641.1 435 L629.9 425 L618.8 415 L607.9 405 L597.1 395 L586.4 385 L575.9 375 L565.5 365 L555.3 355 L545.2 345 L535.3 335 L525.5 325 L515.8 315 L506.3 305 L496.9 295 L487.7 285 L478.6 275 L469.6 265 L460.8 255 L452 245 L443.5 235 L435 225 L426.7 215 L418.5 205 L410.4 195 L402.5 185 L394.7 175 L387 165 L379.4 155 L372 145 L364.7 135 L357.5 125 L350.4 115 L343.5 105 L336.6 95 M1461.3 895 L1441.1 885 L1421 875 L1401.2 865 L1381.6 855 L1362.2 845 L1343 835 L1324.1 825 L1305.3 815 L1286.7 805 L1268.3 795 L1250.2 785 L1232.2 775 L1214.4 765 L1196.8 755 L1179.4 745 L1162.2 735 L1145.2 725 L1128.4 715 L1111.7 705 L1095.3 695 L1079 685 L1063 675 L1047.1 665 L1031.4 655 L1015.8 645 L1000.5 635 L985.3 625 L970.3 615 L955.5 605 L940.9 595 L926.4 585 L912.1 575 L897.9 565 L884 555 L870.2 545 L856.6 535 L843.1 525 L829.8 515 L816.7 505 L803.7 495 L790.9 485 L778.3 475 L765.8 465 L753.5 455 L741.3 445 L729.3 435 L717.4 425 L705.7 415 L694.1 405 L682.7 395 L671.5 385 L660.4 375 L649.4 365 L638.6 355 L627.9 345 L617.4 335 L607.1 325 L596.8 315 L586.7 305 L576.8 295 L567 285 L557.3 275 L547.8 265 L538.4 255 L529.1 245 L520 235 L511 225 L502.2 215 L493.4 205 L484.9 195 L476.4 185 L468.1 175 L459.9 165 L451.8 155 L443.8 145 L436 135 L428.3 125 L420.8 115 L413.3 105 L406 95 M1583.2 895 L1562.1 885 L1541.2 875 L1520.6 865 L1500.1 855 L1479.9 845 L1459.9 835 L1440.1 825 L1420.5 815 L1401.1 805 L1381.9 795 L1362.9 785 L1344.2 775 L1325.6 765 L1307.2 755 L1289.1 745 L1271.1 735 L1253.3 725 L1235.7 715 L1218.4 705 L1201.2 695 L1184.2 685 L1167.3 675 L1150.7 665 L1134.3 655 L1118 645 L1102 635 L1086.1 625 L1070.4 615 L1054.8 605 L1039.5 595 L1024.3 585 L1009.4 575 L994.5 565 L979.9 555 L965.4 545 L951.1 535 L937 525 L923.1 515 L909.3 505 L895.7 495 L882.2 485 L868.9 475 L855.8 465 L842.8 455 L830 445 L817.4 435 L804.9 425 L792.6 415 L780.4 405 L768.4 395 L756.6 385 L744.9 375 L733.3 365 L721.9 355 L710.7 345 L699.6 335 L688.6 325 L677.8 315 L667.1 305 L656.6 295 L646.3 285 L636 275 L626 265 L616 255 L606.2 245 L596.5 235 L587 225 L577.6 215 L568.4 205 L559.3 195 L550.3 185 L541.4 175 L532.7 165 L524.1 155 L515.7 145 L507.4 135 L499.2 125 L491.1 115 L483.2 105 L475.3 95 M1705.1 895 L1683.1 885 L1661.4 875 L1639.9 865 L1618.6 855 L1597.6 845 L1576.7 835 L1556.1 825 L1535.7 815 L1515.5 805 L1495.5 795 L1475.7 785 L1456.2 775 L1436.8 765 L1417.7 755 L1398.7 745 L1380 735 L1361.4 725 L1343.1 715 L1325 705 L1307 695 L1289.3 685 L1271.7 675 L1254.4 665 L1237.2 655 L1220.2 645 L1203.4 635 L1186.8 625 L1170.4 615 L1154.2 605 L1138.2 595 L1122.3 585 L1106.6 575 L1091.1 565 L1075.8 555 L1060.7 545 L1045.7 535 L1030.9 525 L1016.3 515 L1001.9 505 L987.6 495 L973.5 485 L959.6 475 L945.8 465 L932.2 455 L918.8 445 L905.5 435 L892.4 425 L879.5 415 L866.7 405 L854.1 395 L841.6 385 L829.3 375 L817.2 365 L805.2 355 L793.4 345 L781.7 335 L770.2 325 L758.8 315 L747.6 305 L736.5 295 L725.6 285 L714.8 275 L704.1 265 L693.6 255 L683.3 245 L673.1 235 L663 225 L653.1 215 L643.3 205 L633.7 195 L624.2 185 L614.8 175 L605.6 165 L596.5 155 L587.5 145 L578.7 135 L570 125 L561.4 115 L553 105 L544.7 95" stroke="#8c8c8c" stroke-width="1.05" fill="none"/>
<path d="M-1 895.8 L-4.7 891.8 L-9.3 887 L-13.9 882.1 L-18.5 877.2 L-23.2 872.1 L-27.9 867.1 L-32.7 861.9 L-37.5 856.7 L-42.3 851.4 L-47.2 846.1 L-52.1 840.7 L-57 835.2 L-62 829.6 L-67 824 L-72.1 818.3 L-77.2 812.5 L-82.3 806.6 L-87.4 800.6 L-92.6 794.5 L-97.9 788.4 L-103.1 782.1 L-108.5 775.8 L-113.8 769.3 L-119.2 762.8 L-124.6 756.1 L-130.1 749.3 L-135.6 742.4 L-141.1 735.4 L-146.7 728.3 L-152.3 721 L-157.9 713.6 L-163.6 706.1 L-169.3 698.4 L-175.1 690.6 L-180.9 682.7 L-186.8 674.5 L-192.6 666.2 L-198.6 657.7 L-204.5 649.1 L-210.5 640.3 L-216.6 631.2 L-222.6 622 L-228.8 612.5 L-234.9 602.8 L-241.1 592.9 L-247.4 582.7 L-253.7 572.3 L-260 561.6 L-266.3 550.6 L-272.7 539.2 L-279.2 527.6 L-285.6 515.6 L-292.1 503.3 L-298.7 490.5 L-305.3 477.4 L-311.9 463.8 L-318.5 449.8 L-325.1 435.2 L-331.8 420.1 L-338.5 404.4 L-345.2 388.1 L-351.9 371.1 L-358.6 353.3 L-365.2 334.7 L-371.9 315.3 L-378.5 294.8 L-385 273.3 L-391.4 250.6 L-397.7 226.5 L-403.9 200.9 L-409.8 173.6 L-415.5 144.3 L-420.8 112.7 L-425.6 78.4 L-427.8 60.1 M59.8 895.8 L55.9 891.8 L51.3 887 L46.6 882.1 L41.9 877.2 L37.1 872.1 L32.3 867.1 L27.4 861.9 L22.5 856.7 L17.6 851.4 L12.6 846.1 L7.6 840.7 L2.5 835.2 L-2.7 829.6 L-7.8 824 L-13 818.3 L-18.3 812.5 L-23.6 806.6 L-28.9 800.6 L-34.3 794.5 L-39.8 788.4 L-45.2 782.1 L-50.8 775.8 L-56.3 769.3 L-61.9 762.8 L-67.6 756.1 L-73.3 749.3 L-79 742.4 L-84.8 735.4 L-90.6 728.3 L-96.5 721 L-102.4 713.6 L-108.4 706.1 L-114.4 698.4 L-120.5 690.6 L-126.5 682.7 L-132.7 674.5 L-138.9 666.2 L-145.1 657.7 L-151.4 649.1 L-157.7 640.3 L-164.1 631.2 L-170.5 622 L-177 612.5 L-183.5 602.8 L-190 592.9 L-196.6 582.7 L-203.3 572.3 L-210 561.6 L-216.7 550.6 L-223.5 539.2 L-230.3 527.6 L-237.2 515.6 L-244.2 503.3 L-251.1 490.5 L-258.1 477.4 L-265.2 463.8 L-272.3 449.8 L-279.4 435.2 L-286.5 420.1 L-293.7 404.4 L-300.9 388.1 L-308.2 371.1 L-315.4 353.3 L-322.6 334.7 L-329.8 315.3 L-337 294.8 L-344.2 273.3 L-351.3 250.6 L-358.2 226.5 L-365.1 200.9 L-371.8 173.6 L-378.2 144.3 L-384.3 112.7 L-390 78.4 L-392.7 60.1 M120.4 895.8 L116.5 891.8 L111.9 887 L107.2 882.1 L102.5 877.2 L97.7 872.1 L92.8 867.1 L87.9 861.9 L82.9 856.7 L77.9 851.4 L72.8 846.1 L67.7 840.7 L62.5 835.2 L57.3 829.6 L52 824 L46.7 818.3 L41.3 812.5 L35.8 806.6 L30.3 800.6 L24.8 794.5 L19.2 788.4 L13.5 782.1 L7.8 775.8 L2.1 769.3 L-3.8 762.8 L-9.6 756.1 L-15.5 749.3 L-21.5 742.4 L-27.5 735.4 L-33.6 728.3 L-39.7 721 L-45.9 713.6 L-52.1 706.1 L-58.4 698.4 L-64.7 690.6 L-71.1 682.7 L-77.5 674.5 L-84 666.2 L-90.6 657.7 L-97.2 649.1 L-103.8 640.3 L-110.5 631.2 L-117.3 622 L-124.1 612.5 L-130.9 602.8 L-137.8 592.9 L-144.8 582.7 L-151.8 572.3 L-158.9 561.6 L-166.1 550.6 L-173.2 539.2 L-180.5 527.6 L-187.8 515.6 L-195.1 503.3 L-202.5 490.5 L-210 477.4 L-217.5 463.8 L-225.1 449.8 L-232.7 435.2 L-240.3 420.1 L-248 404.4 L-255.7 388.1 L-263.5 371.1 L-271.3 353.3 L-279.1 334.7 L-286.9 315.3 L-294.7 294.8 L-302.5 273.3 L-310.2 250.6 L-317.9 226.5 L-325.5 200.9 L-332.9 173.6 L-340.1 144.3 L-347.1 112.7 L-353.7 78.4 L-356.8 60.1 M180.8 895.8 L177.1 891.8 L172.5 887 L167.9 882.1 L163.2 877.2 L158.4 872.1 L153.6 867.1 L148.7 861.9 L143.8 856.7 L138.8 851.4 L133.7 846.1 L128.6 840.7 L123.3 835.2 L118.1 829.6 L112.7 824 L107.3 818.3 L101.9 812.5 L96.3 806.6 L90.7 800.6 L85.1 794.5 L79.3 788.4 L73.5 782.1 L67.7 775.8 L61.8 769.3 L55.8 762.8 L49.7 756.1 L43.6 749.3 L37.5 742.4 L31.2 735.4 L25 728.3 L18.6 721 L12.2 713.6 L5.7 706.1 L-0.8 698.4 L-7.4 690.6 L-14.1 682.7 L-20.8 674.5 L-27.6 666.2 L-34.4 657.7 L-41.3 649.1 L-48.3 640.3 L-55.3 631.2 L-62.4 622 L-69.6 612.5 L-76.8 602.8 L-84.1 592.9 L-91.4 582.7 L-98.8 572.3 L-106.3 561.6 L-113.8 550.6 L-121.4 539.2 L-129.1 527.6 L-136.8 515.6 L-144.6 503.3 L-152.4 490.5 L-160.4 477.4 L-168.3 463.8 L-176.4 449.8 L-184.5 435.2 L-192.6 420.1 L-200.9 404.4 L-209.1 388.1 L-217.4 371.1 L-225.8 353.3 L-234.2 334.7 L-242.6 315.3 L-251 294.8 L-259.5 273.3 L-267.9 250.6 L-276.3 226.5 L-284.6 200.9 L-292.8 173.6 L-300.9 144.3 L-308.7 112.7 L-316.2 78.4 L-319.8 60.1 M241.1 895.8 L237.5 891.8 L233.1 887 L228.7 882.1 L224.1 877.2 L219.5 872.1 L214.8 867.1 L210.1 861.9 L205.3 856.7 L200.3 851.4 L195.3 846.1 L190.3 840.7 L185.1 835.2 L179.9 829.6 L174.6 824 L169.2 818.3 L163.7 812.5 L158.2 806.6 L152.6 800.6 L146.9 794.5 L141.1 788.4 L135.2 782.1 L129.3 775.8 L123.3 769.3 L117.2 762.8 L111 756.1 L104.8 749.3 L98.5 742.4 L92.1 735.4 L85.6 728.3 L79 721 L72.4 713.6 L65.7 706.1 L59 698.4 L52.1 690.6 L45.2 682.7 L38.2 674.5 L31.1 666.2 L24 657.7 L16.8 649.1 L9.5 640.3 L2.2 631.2 L-5.3 622 L-12.8 612.5 L-20.3 602.8 L-28 592.9 L-35.7 582.7 L-43.5 572.3 L-51.4 561.6 L-59.3 550.6 L-67.3 539.2 L-75.4 527.6 L-83.6 515.6 L-91.8 503.3 L-100.1 490.5 L-108.5 477.4 L-117 463.8 L-125.6 449.8 L-134.2 435.2 L-142.9 420.1 L-151.6 404.4 L-160.4 388.1 L-169.3 371.1 L-178.3 353.3 L-187.3 334.7 L-196.4 315.3 L-205.5 294.8 L-214.6 273.3 L-223.7 250.6 L-232.9 226.5 L-241.9 200.9 L-251 173.6 L-259.9 144.3 L-268.6 112.7 L-277.1 78.4 L-281.2 60.1 M301.1 895.8 L297.8 891.8 L293.7 887 L289.5 882.1 L285.3 877.2 L280.9 872.1 L276.5 867.1 L272 861.9 L267.4 856.7 L262.7 851.4 L257.9 846.1 L253.1 840.7 L248.1 835.2 L243 829.6 L237.9 824 L232.6 818.3 L227.3 812.5 L221.8 806.6 L216.3 800.6 L210.7 794.5 L204.9 788.4 L199.1 782.1 L193.2 775.8 L187.2 769.3 L181.1 762.8 L174.8 756.1 L168.5 749.3 L162.1 742.4 L155.7 735.4 L149.1 728.3 L142.4 721 L135.6 713.6 L128.8 706.1 L121.8 698.4 L114.8 690.6 L107.6 682.7 L100.4 674.5 L93.1 666.2 L85.7 657.7 L78.2 649.1 L70.6 640.3 L62.9 631.2 L55.2 622 L47.3 612.5 L39.4 602.8 L31.4 592.9 L23.3 582.7 L15.1 572.3 L6.8 561.6 L-1.5 550.6 L-10 539.2 L-18.5 527.6 L-27.2 515.6 L-35.9 503.3 L-44.7 490.5 L-53.6 477.4 L-62.6 463.8 L-71.6 449.8 L-80.8 435.2 L-90 420.1 L-99.4 404.4 L-108.8 388.1 L-118.3 371.1 L-127.9 353.3 L-137.6 334.7 L-147.3 315.3 L-157.1 294.8 L-167 273.3 L-176.8 250.6 L-186.8 226.5 L-196.7 200.9 L-206.6 173.6 L-216.4 144.3 L-226.1 112.7 L-235.5 78.4 L-240.2 60.1 M361 895.8 L358 891.8 L354.3 887 L350.5 882.1 L346.7 877.2 L342.7 872.1 L338.7 867.1 L334.5 861.9 L330.3 856.7 L326 851.4 L321.5 846.1 L317 840.7 L312.3 835.2 L307.6 829.6 L302.7 824 L297.8 818.3 L292.7 812.5 L287.5 806.6 L282.2 800.6 L276.8 794.5 L271.2 788.4 L265.6 782.1 L259.8 775.8 L253.9 769.3 L248 762.8 L241.8 756.1 L235.6 749.3 L229.3 742.4 L222.8 735.4 L216.2 728.3 L209.5 721 L202.7 713.6 L195.7 706.1 L188.7 698.4 L181.5 690.6 L174.3 682.7 L166.9 674.5 L159.4 666.2 L151.7 657.7 L144 649.1 L136.2 640.3 L128.2 631.2 L120.2 622 L112 612.5 L103.7 602.8 L95.4 592.9 L86.9 582.7 L78.3 572.3 L69.6 561.6 L60.8 550.6 L51.9 539.2 L42.9 527.6 L33.8 515.6 L24.6 503.3 L15.3 490.5 L5.8 477.4 L-3.7 463.8 L-13.3 449.8 L-23.1 435.2 L-32.9 420.1 L-42.9 404.4 L-53 388.1 L-63.1 371.1 L-73.4 353.3 L-83.8 334.7 L-94.2 315.3 L-104.8 294.8 L-115.4 273.3 L-126.1 250.6 L-136.9 226.5 L-147.7 200.9 L-158.5 173.6 L-169.3 144.3 L-180 112.7 L-190.6 78.4 L-195.8 60.1 M420.7 895.8 L418.1 891.8 L414.9 887 L411.6 882.1 L408.3 877.2 L404.8 872.1 L401.3 867.1 L397.6 861.9 L393.9 856.7 L390 851.4 L386.1 846.1 L382 840.7 L377.9 835.2 L373.6 829.6 L369.2 824 L364.7 818.3 L360.1 812.5 L355.3 806.6 L350.4 800.6 L345.4 794.5 L340.3 788.4 L335 782.1 L329.6 775.8 L324 769.3 L318.3 762.8 L312.5 756.1 L306.5 749.3 L300.4 742.4 L294.1 735.4 L287.7 728.3 L281.2 721 L274.5 713.6 L267.7 706.1 L260.7 698.4 L253.5 690.6 L246.2 682.7 L238.8 674.5 L231.2 666.2 L223.5 657.7 L215.7 649.1 L207.7 640.3 L199.5 631.2 L191.2 622 L182.8 612.5 L174.3 602.8 L165.6 592.9 L156.7 582.7 L147.8 572.3 L138.7 561.6 L129.5 550.6 L120.1 539.2 L110.6 527.6 L101 515.6 L91.3 503.3 L81.4 490.5 L71.4 477.4 L61.3 463.8 L51.1 449.8 L40.7 435.2 L30.2 420.1 L19.5 404.4 L8.8 388.1 L-2.1 371.1 L-13.1 353.3 L-24.3 334.7 L-35.6 315.3 L-47 294.8 L-58.5 273.3 L-70.1 250.6 L-81.8 226.5 L-93.6 200.9 L-105.4 173.6 L-117.3 144.3 L-129.2 112.7 L-141 78.4 L-146.8 60.1 M480.3 895.8 L478.1 891.8 L475.5 887 L472.8 882.1 L470 877.2 L467.2 872.1 L464.2 867.1 L461.2 861.9 L458 856.7 L454.8 851.4 L451.5 846.1 L448 840.7 L444.5 835.2 L440.8 829.6 L437 824 L433.2 818.3 L429.2 812.5 L425 806.6 L420.7 800.6 L416.3 794.5 L411.8 788.4 L407.1 782.1 L402.3 775.8 L397.3 769.3 L392.2 762.8 L386.9 756.1 L381.4 749.3 L375.8 742.4 L370 735.4 L364.1 728.3 L357.9 721 L351.6 713.6 L345.1 706.1 L338.4 698.4 L331.6 690.6 L324.5 682.7 L317.3 674.5 L309.9 666.2 L302.3 657.7 L294.5 649.1 L286.5 640.3 L278.4 631.2 L270 622 L261.5 612.5 L252.8 602.8 L243.9 592.9 L234.8 582.7 L225.6 572.3 L216.2 561.6 L206.6 550.6 L196.8 539.2 L186.9 527.6 L176.8 515.6 L166.5 503.3 L156.1 490.5 L145.5 477.4 L134.8 463.8 L123.9 449.8 L112.8 435.2 L101.6 420.1 L90.2 404.4 L78.6 388.1 L66.9 371.1 L55.1 353.3 L43.1 334.7 L30.9 315.3 L18.5 294.8 L6.1 273.3 L-6.6 250.6 L-19.4 226.5 L-32.3 200.9 L-45.3 173.6 L-58.4 144.3 L-71.5 112.7 L-84.7 78.4 L-91.3 60.1 M539.8 895.8 L538.1 891.8 L536.1 887 L534 882.1 L531.8 877.2 L529.6 872.1 L527.3 867.1 L524.9 861.9 L522.5 856.7 L519.9 851.4 L517.3 846.1 L514.6 840.7 L511.7 835.2 L508.8 829.6 L505.8 824 L502.7 818.3 L499.4 812.5 L496.1 806.6 L492.6 800.6 L489 794.5 L485.2 788.4 L481.4 782.1 L477.3 775.8 L473.2 769.3 L468.9 762.8 L464.4 756.1 L459.7 749.3 L454.9 742.4 L449.9 735.4 L444.7 728.3 L439.3 721 L433.7 713.6 L428 706.1 L422 698.4 L415.8 690.6 L409.3 682.7 L402.7 674.5 L395.8 666.2 L388.7 657.7 L381.4 649.1 L373.8 640.3 L365.9 631.2 L357.9 622 L349.5 612.5 L341 602.8 L332.2 592.9 L323.1 582.7 L313.8 572.3 L304.3 561.6 L294.5 550.6 L284.5 539.2 L274.2 527.6 L263.8 515.6 L253.1 503.3 L242.1 490.5 L231 477.4 L219.6 463.8 L208.1 449.8 L196.3 435.2 L184.3 420.1 L172.1 404.4 L159.7 388.1 L147.1 371.1 L134.3 353.3 L121.3 334.7 L108 315.3 L94.6 294.8 L81 273.3 L67.2 250.6 L53.2 226.5 L39 200.9 L24.6 173.6 L10.1 144.3 L-4.6 112.7 L-19.4 78.4 L-26.7 60.1 M599.3 895.8 L598.1 891.8 L596.7 887 L595.2 882.1 L593.7 877.2 L592.1 872.1 L590.4 867.1 L588.7 861.9 L586.9 856.7 L585.1 851.4 L583.2 846.1 L581.2 840.7 L579.2 835.2 L577 829.6 L574.8 824 L572.5 818.3 L570.1 812.5 L567.6 806.6 L565 800.6 L562.3 794.5 L559.5 788.4 L556.6 782.1 L553.5 775.8 L550.3 769.3 L547 762.8 L543.6 756.1 L540 749.3 L536.2 742.4 L532.3 735.4 L528.1 728.3 L523.9 721 L519.4 713.6 L514.7 706.1 L509.8 698.4 L504.7 690.6 L499.3 682.7 L493.7 674.5 L487.9 666.2 L481.8 657.7 L475.4 649.1 L468.8 640.3 L461.9 631.2 L454.6 622 L447.1 612.5 L439.2 602.8 L431.1 592.9 L422.6 582.7 L413.7 572.3 L404.6 561.6 L395.1 550.6 L385.2 539.2 L375.1 527.6 L364.6 515.6 L353.7 503.3 L342.6 490.5 L331.1 477.4 L319.3 463.8 L307.2 449.8 L294.8 435.2 L282.1 420.1 L269.1 404.4 L255.8 388.1 L242.2 371.1 L228.4 353.3 L214.3 334.7 L199.9 315.3 L185.2 294.8 L170.3 273.3 L155.1 250.6 L139.6 226.5 L123.9 200.9 L107.9 173.6 L91.7 144.3 L75.2 112.7 L58.5 78.4 L50.1 60.1 M658.9 895.8 L658.2 891.8 L657.3 887 L656.4 882.1 L655.4 877.2 L654.4 872.1 L653.4 867.1 L652.3 861.9 L651.2 856.7 L650 851.4 L648.8 846.1 L647.6 840.7 L646.3 835.2 L644.9 829.6 L643.5 824 L642 818.3 L640.4 812.5 L638.8 806.6 L637.1 800.6 L635.3 794.5 L633.4 788.4 L631.5 782.1 L629.4 775.8 L627.3 769.3 L625.1 762.8 L622.7 756.1 L620.2 749.3 L617.7 742.4 L614.9 735.4 L612.1 728.3 L609.1 721 L605.9 713.6 L602.6 706.1 L599.1 698.4 L595.4 690.6 L591.5 682.7 L587.4 674.5 L583 666.2 L578.5 657.7 L573.6 649.1 L568.5 640.3 L563.1 631.2 L557.4 622 L551.4 612.5 L545.1 602.8 L538.4 592.9 L531.3 582.7 L523.8 572.3 L515.9 561.6 L507.6 550.6 L498.9 539.2 L489.7 527.6 L480 515.6 L469.9 503.3 L459.3 490.5 L448.2 477.4 L436.6 463.8 L424.5 449.8 L412 435.2 L399 420.1 L385.5 404.4 L371.6 388.1 L357.2 371.1 L342.4 353.3 L327.1 334.7 L311.5 315.3 L295.5 294.8 L279.1 273.3 L262.3 250.6 L245.1 226.5 L227.5 200.9 L209.6 173.6 L191.3 144.3 L172.7 112.7 L153.7 78.4 L144.1 60.1 M718.6 895.8 L718.3 891.8 L717.9 887 L717.5 882.1 L717.1 877.2 L716.6 872.1 L716.1 867.1 L715.6 861.9 L715.1 856.7 L714.5 851.4 L714 846.1 L713.3 840.7 L712.7 835.2 L712 829.6 L711.3 824 L710.5 818.3 L709.8 812.5 L708.9 806.6 L708 800.6 L707.1 794.5 L706.1 788.4 L705.1 782.1 L704 775.8 L702.8 769.3 L701.6 762.8 L700.3 756.1 L698.9 749.3 L697.5 742.4 L695.9 735.4 L694.3 728.3 L692.5 721 L690.7 713.6 L688.8 706.1 L686.7 698.4 L684.5 690.6 L682.1 682.7 L679.6 674.5 L677 666.2 L674.1 657.7 L671.1 649.1 L667.9 640.3 L664.4 631.2 L660.7 622 L656.8 612.5 L652.5 602.8 L648 592.9 L643.1 582.7 L637.9 572.3 L632.3 561.6 L626.3 550.6 L619.8 539.2 L612.9 527.6 L605.5 515.6 L597.5 503.3 L588.9 490.5 L579.7 477.4 L569.9 463.8 L559.4 449.8 L548.1 435.2 L536.2 420.1 L523.5 404.4 L510 388.1 L495.8 371.1 L480.9 353.3 L465.2 334.7 L448.8 315.3 L431.8 294.8 L414 273.3 L395.6 250.6 L376.6 226.5 L357 200.9 L336.8 173.6 L316.1 144.3 L294.8 112.7 L273 78.4 L261.8 60.1 M778.4 895.8 L778.5 891.8 L778.5 887 L778.5 882.1 L778.5 877.2 L778.6 872.1 L778.6 867.1 L778.5 861.9 L778.5 856.7 L778.5 851.4 L778.4 846.1 L778.4 840.7 L778.3 835.2 L778.2 829.6 L778.1 824 L778 818.3 L777.8 812.5 L777.7 806.6 L777.5 800.6 L777.3 794.5 L777 788.4 L776.8 782.1 L776.5 775.8 L776.1 769.3 L775.8 762.8 L775.4 756.1 L775 749.3 L774.5 742.4 L774 735.4 L773.4 728.3 L772.8 721 L772.1 713.6 L771.3 706.1 L770.5 698.4 L769.6 690.6 L768.7 682.7 L767.6 674.5 L766.5 666.2 L765.3 657.7 L763.9 649.1 L762.4 640.3 L760.8 631.2 L759.1 622 L757.2 612.5 L755.1 602.8 L752.9 592.9 L750.4 582.7 L747.7 572.3 L744.7 561.6 L741.5 550.6 L737.9 539.2 L734 527.6 L729.7 515.6 L725 503.3 L719.9 490.5 L714.2 477.4 L707.9 463.8 L700.9 449.8 L693.3 435.2 L684.9 420.1 L675.6 404.4 L665.3 388.1 L654 371.1 L641.7 353.3 L628.1 334.7 L613.3 315.3 L597.3 294.8 L580 273.3 L561.4 250.6 L541.6 226.5 L520.6 200.9 L498.4 173.6 L475.2 144.3 L451 112.7 L425.7 78.4 L412.8 60.1 M838.4 895.8 L838.7 891.8 L839.1 887 L839.5 882.1 L839.9 877.2 L840.3 872.1 L840.7 867.1 L841.1 861.9 L841.5 856.7 L841.8 851.4 L842.2 846.1 L842.6 840.7 L843 835.2 L843.4 829.6 L843.8 824 L844.2 818.3 L844.6 812.5 L844.9 806.6 L845.3 800.6 L845.7 794.5 L846.1 788.4 L846.4 782.1 L846.8 775.8 L847.1 769.3 L847.5 762.8 L847.8 756.1 L848.1 749.3 L848.4 742.4 L848.7 735.4 L849 728.3 L849.2 721 L849.5 713.6 L849.7 706.1 L849.9 698.4 L850.1 690.6 L850.2 682.7 L850.3 674.5 L850.4 666.2 L850.4 657.7 L850.4 649.1 L850.4 640.3 L850.2 631.2 L850.1 622 L849.8 612.5 L849.5 602.8 L849.1 592.9 L848.7 582.7 L848.1 572.3 L847.4 561.6 L846.5 550.6 L845.5 539.2 L844.4 527.6 L843 515.6 L841.5 503.3 L839.6 490.5 L837.5 477.4 L835.1 463.8 L832.3 449.8 L829.1 435.2 L825.4 420.1 L821.2 404.4 L816.2 388.1 L810.6 371.1 L804 353.3 L796.4 334.7 L787.6 315.3 L777.4 294.8 L765.7 273.3 L752.1 250.6 L736.5 226.5 L718.7 200.9 L698.6 173.6 L676 144.3 L651 112.7 L623.6 78.4 L609.1 60.1 M898.5 895.8 L899 891.8 L899.7 887 L900.4 882.1 L901.1 877.2 L901.8 872.1 L902.5 867.1 L903.2 861.9 L903.9 856.7 L904.7 851.4 L905.4 846.1 L906.1 840.7 L906.9 835.2 L907.7 829.6 L908.5 824 L909.2 818.3 L910 812.5 L910.8 806.6 L911.7 800.6 L912.5 794.5 L913.3 788.4 L914.2 782.1 L915 775.8 L915.9 769.3 L916.7 762.8 L917.6 756.1 L918.5 749.3 L919.4 742.4 L920.3 735.4 L921.2 728.3 L922.2 721 L923.1 713.6 L924 706.1 L925 698.4 L925.9 690.6 L926.9 682.7 L927.9 674.5 L928.8 666.2 L929.8 657.7 L930.8 649.1 L931.8 640.3 L932.8 631.2 L933.7 622 L934.7 612.5 L935.7 602.8 L936.7 592.9 L937.6 582.7 L938.5 572.3 L939.5 561.6 L940.3 550.6 L941.2 539.2 L942 527.6 L942.8 515.6 L943.5 503.3 L944.2 490.5 L944.7 477.4 L945.2 463.8 L945.6 449.8 L945.8 435.2 L945.9 420.1 L945.7 404.4 L945.3 388.1 L944.7 371.1 L943.6 353.3 L942.2 334.7 L940.2 315.3 L937.5 294.8 L934 273.3 L929.5 250.6 L923.7 226.5 L916.3 200.9 L906.9 173.6 L894.9 144.3 L879.6 112.7 L860.4 78.4 L849.1 60.1 M958.7 895.8 L959.4 891.8 L960.3 887 L961.2 882.1 L962.1 877.2 L963.1 872.1 L964 867.1 L965 861.9 L966 856.7 L967 851.4 L968 846.1 L969 840.7 L970 835.2 L971.1 829.6 L972.2 824 L973.3 818.3 L974.4 812.5 L975.5 806.6 L976.7 800.6 L977.8 794.5 L979 788.4 L980.2 782.1 L981.4 775.8 L982.7 769.3 L984 762.8 L985.2 756.1 L986.6 749.3 L987.9 742.4 L989.3 735.4 L990.6 728.3 L992.1 721 L993.5 713.6 L995 706.1 L996.5 698.4 L998 690.6 L999.5 682.7 L1001.1 674.5 L1002.7 666.2 L1004.4 657.7 L1006 649.1 L1007.7 640.3 L1009.5 631.2 L1011.3 622 L1013.1 612.5 L1014.9 602.8 L1016.8 592.9 L1018.8 582.7 L1020.7 572.3 L1022.7 561.6 L1024.8 550.6 L1026.9 539.2 L1029 527.6 L1031.2 515.6 L1033.4 503.3 L1035.6 490.5 L1037.9 477.4 L1040.3 463.8 L1042.7 449.8 L1045.1 435.2 L1047.5 420.1 L1050 404.4 L1052.5 388.1 L1054.9 371.1 L1057.4 353.3 L1059.9 334.7 L1062.3 315.3 L1064.6 294.8 L1066.8 273.3 L1068.8 250.6 L1070.5 226.5 L1071.9 200.9 L1072.7 173.6 L1072.7 144.3 L1071.6 112.7 L1068.9 78.4 L1066.7 60.1" stroke="#8c8c8c" stroke-width="1" stroke-dasharray="7.5 8.5" fill="none"/>
<path d="M-266.7 895 L-259 885 L-251.3 875 L-243.6 865 L-235.8 855 L-228.1 845 L-220.3 835 L-212.6 825 L-204.8 815 L-197.1 805 L-189.3 795 L-181.5 785 L-173.8 775 L-166 765 L-158.2 755 L-150.4 745 L-142.6 735 L-134.8 725 L-127 715 L-119.2 705 L-111.4 695 L-103.6 685 L-95.7 675 L-87.9 665 L-80.1 655 L-72.2 645 L-64.4 635 L-56.6 625 L-48.7 615 L-40.9 605 L-33 595 L-25.1 585 L-17.3 575 L-9.4 565 L-1.5 555 L6.4 545 L14.2 535 L22.1 525 L30 515 L37.9 505 L45.8 495 L53.7 485 L61.6 475 L69.5 465 L77.5 455 L85.4 445 L93.3 435 L101.2 425 L109.2 415 L117.1 405 L125.1 395 L133 385 L141 375 L148.9 365 L156.9 355 L164.8 345 L172.8 335 L180.8 325 L188.8 315 L196.7 305 L204.7 295 L212.7 285 L220.7 275 L228.7 265 L236.7 255 L244.7 245 L252.7 235 L260.7 225 L268.7 215 L276.8 205 L284.8 195 L292.8 185 L300.8 175 L308.9 165 L316.9 155 L325 145 L333 135 L341.1 125 L349.1 115 L357.2 105 L365.2 95 M-200.8 895 L-193.2 885 L-185.6 875 L-178 865 L-170.4 855 L-162.8 845 L-155.2 835 L-147.6 825 L-140 815 L-132.3 805 L-124.7 795 L-117.1 785 L-109.4 775 L-101.8 765 L-94.1 755 L-86.5 745 L-78.8 735 L-71.2 725 L-63.5 715 L-55.8 705 L-48.1 695 L-40.5 685 L-32.8 675 L-25.1 665 L-17.4 655 L-9.7 645 L-2 635 L5.7 625 L13.5 615 L21.2 605 L28.9 595 L36.6 585 L44.4 575 L52.1 565 L59.9 555 L67.6 545 L75.4 535 L83.1 525 L90.9 515 L98.7 505 L106.5 495 L114.2 485 L122 475 L129.8 465 L137.6 455 L145.4 445 L153.2 435 L161 425 L168.8 415 L176.6 405 L184.5 395 L192.3 385 L200.1 375 L208 365 L215.8 355 L223.6 345 L231.5 335 L239.3 325 L247.2 315 L255.1 305 L262.9 295 L270.8 285 L278.7 275 L286.6 265 L294.4 255 L302.3 245 L310.2 235 L318.1 225 L326 215 L333.9 205 L341.8 195 L349.7 185 L357.7 175 L365.6 165 L373.5 155 L381.4 145 L389.4 135 L397.3 125 L405.3 115 L413.2 105 L421.2 95 M-130.6 895 L-123.1 885 L-115.7 875 L-108.3 865 L-100.8 855 L-93.4 845 L-85.9 835 L-78.5 825 L-71 815 L-63.5 805 L-56.1 795 L-48.6 785 L-41.1 775 L-33.6 765 L-26.1 755 L-18.6 745 L-11.1 735 L-3.6 725 L4 715 L11.5 705 L19 695 L26.5 685 L34.1 675 L41.6 665 L49.2 655 L56.8 645 L64.3 635 L71.9 625 L79.5 615 L87 605 L94.6 595 L102.2 585 L109.8 575 L117.4 565 L125 555 L132.6 545 L140.3 535 L147.9 525 L155.5 515 L163.1 505 L170.8 495 L178.4 485 L186.1 475 L193.7 465 L201.4 455 L209 445 L216.7 435 L224.4 425 L232.1 415 L239.7 405 L247.4 395 L255.1 385 L262.8 375 L270.5 365 L278.2 355 L286 345 L293.7 335 L301.4 325 L309.1 315 L316.9 305 L324.6 295 L332.3 285 L340.1 275 L347.8 265 L355.6 255 L363.3 245 L371.1 235 L378.9 225 L386.7 215 L394.4 205 L402.2 195 L410 185 L417.8 175 L425.6 165 L433.4 155 L441.2 145 L449 135 L456.8 125 L464.7 115 L472.5 105 L480.3 95 M-30.7 895 L-23.5 885 L-16.3 875 L-9 865 L-1.8 855 L5.4 845 L12.6 835 L19.8 825 L27.1 815 L34.3 805 L41.6 795 L48.8 785 L56.1 775 L63.4 765 L70.7 755 L77.9 745 L85.2 735 L92.5 725 L99.8 715 L107.2 705 L114.5 695 L121.8 685 L129.1 675 L136.5 665 L143.8 655 L151.1 645 L158.5 635 L165.9 625 L173.2 615 L180.6 605 L188 595 L195.3 585 L202.7 575 L210.1 565 L217.5 555 L224.9 545 L232.4 535 L239.8 525 L247.2 515 L254.6 505 L262.1 495 L269.5 485 L277 475 L284.4 465 L291.9 455 L299.3 445 L306.8 435 L314.3 425 L321.8 415 L329.2 405 L336.7 395 L344.2 385 L351.7 375 L359.2 365 L366.8 355 L374.3 345 L381.8 335 L389.3 325 L396.9 315 L404.4 305 L412 295 L419.5 285 L427.1 275 L434.6 265 L442.2 255 L449.8 245 L457.4 235 L465 225 L472.5 215 L480.1 205 L487.7 195 L495.3 185 L503 175 L510.6 165 L518.2 155 L525.8 145 L533.5 135 L541.1 125 L548.7 115 L556.4 105 L564 95 M51 895 L57.9 885 L65 875 L72 865 L79 855 L86 845 L93.1 835 L100.1 825 L107.1 815 L114.2 805 L121.3 795 L128.3 785 L135.4 775 L142.5 765 L149.6 755 L156.7 745 L163.8 735 L170.9 725 L178 715 L185.2 705 L192.3 695 L199.4 685 L206.6 675 L213.7 665 L220.9 655 L228.1 645 L235.2 635 L242.4 625 L249.6 615 L256.8 605 L264 595 L271.2 585 L278.4 575 L285.6 565 L292.9 555 L300.1 545 L307.3 535 L314.6 525 L321.8 515 L329.1 505 L336.3 495 L343.6 485 L350.9 475 L358.2 465 L365.5 455 L372.8 445 L380.1 435 L387.4 425 L394.7 415 L402 405 L409.3 395 L416.7 385 L424 375 L431.4 365 L438.7 355 L446.1 345 L453.4 335 L460.8 325 L468.2 315 L475.6 305 L483 295 L490.4 285 L497.8 275 L505.2 265 L512.6 255 L520 245 L527.4 235 L534.8 225 L542.3 215 L549.7 205 L557.2 195 L564.6 185 L572.1 175 L579.5 165 L587 155 L594.5 145 L602 135 L609.5 125 L617 115 L624.4 105 L632 95 M101.3 895 L108.2 885 L115.1 875 L122 865 L128.9 855 L135.8 845 L142.7 835 L149.6 825 L156.5 815 L163.5 805 L170.4 795 L177.4 785 L184.3 775 L191.3 765 L198.3 755 L205.2 745 L212.2 735 L219.2 725 L226.2 715 L233.2 705 L240.3 695 L247.3 685 L254.3 675 L261.4 665 L268.4 655 L275.5 645 L282.5 635 L289.6 625 L296.7 615 L303.7 605 L310.8 595 L317.9 585 L325 575 L332.1 565 L339.3 555 L346.4 545 L353.5 535 L360.6 525 L367.8 515 L374.9 505 L382.1 495 L389.3 485 L396.4 475 L403.6 465 L410.8 455 L418 445 L425.2 435 L432.4 425 L439.6 415 L446.8 405 L454 395 L461.3 385 L468.5 375 L475.7 365 L483 355 L490.3 345 L497.5 335 L504.8 325 L512.1 315 L519.3 305 L526.6 295 L533.9 285 L541.2 275 L548.5 265 L555.8 255 L563.2 245 L570.5 235 L577.8 225 L585.2 215 L592.5 205 L599.9 195 L607.2 185 L614.6 175 L621.9 165 L629.3 155 L636.7 145 L644.1 135 L651.5 125 L658.9 115 L666.3 105 L673.7 95 M138.3 895 L145.1 885 L151.9 875 L158.7 865 L165.5 855 L172.3 845 L179.1 835 L186 825 L192.8 815 L199.7 805 L206.5 795 L213.4 785 L220.2 775 L227.1 765 L234 755 L240.9 745 L247.8 735 L254.7 725 L261.6 715 L268.5 705 L275.5 695 L282.4 685 L289.4 675 L296.3 665 L303.3 655 L310.2 645 L317.2 635 L324.2 625 L331.2 615 L338.2 605 L345.2 595 L352.2 585 L359.2 575 L366.3 565 L373.3 555 L380.3 545 L387.4 535 L394.4 525 L401.5 515 L408.6 505 L415.6 495 L422.7 485 L429.8 475 L436.9 465 L444 455 L451.1 445 L458.3 435 L465.4 425 L472.5 415 L479.7 405 L486.8 395 L494 385 L501.1 375 L508.3 365 L515.5 355 L522.6 345 L529.8 335 L537 325 L544.2 315 L551.4 305 L558.6 295 L565.9 285 L573.1 275 L580.3 265 L587.5 255 L594.8 245 L602 235 L609.3 225 L616.6 215 L623.8 205 L631.1 195 L638.4 185 L645.7 175 L653 165 L660.3 155 L667.6 145 L674.9 135 L682.2 125 L689.6 115 L696.9 105 L704.2 95 M192.4 895 L199 885 L205.7 875 L212.3 865 L219 855 L225.7 845 L232.4 835 L239.1 825 L245.8 815 L252.5 805 L259.2 795 L265.9 785 L272.7 775 L279.4 765 L286.2 755 L292.9 745 L299.7 735 L306.5 725 L313.3 715 L320 705 L326.8 695 L333.7 685 L340.5 675 L347.3 665 L354.1 655 L361 645 L367.8 635 L374.7 625 L381.6 615 L388.4 605 L395.3 595 L402.2 585 L409.1 575 L416 565 L422.9 555 L429.8 545 L436.8 535 L443.7 525 L450.6 515 L457.6 505 L464.6 495 L471.5 485 L478.5 475 L485.5 465 L492.5 455 L499.5 445 L506.5 435 L513.5 425 L520.5 415 L527.5 405 L534.5 395 L541.6 385 L548.6 375 L555.7 365 L562.7 355 L569.8 345 L576.9 335 L584 325 L591 315 L598.1 305 L605.2 295 L612.3 285 L619.5 275 L626.6 265 L633.7 255 L640.9 245 L648 235 L655.1 225 L662.3 215 L669.5 205 L676.6 195 L683.8 185 L691 175 L698.2 165 L705.4 155 L712.6 145 L719.8 135 L727 125 L734.2 115 L741.5 105 L748.7 95 M232.1 895 L238.6 885 L245.2 875 L251.8 865 L258.3 855 L264.9 845 L271.5 835 L278.1 825 L284.7 815 L291.3 805 L297.9 795 L304.5 785 L311.2 775 L317.8 765 L324.5 755 L331.1 745 L337.8 735 L344.5 725 L351.2 715 L357.9 705 L364.6 695 L371.3 685 L378 675 L384.8 665 L391.5 655 L398.3 645 L405 635 L411.8 625 L418.5 615 L425.3 605 L432.1 595 L438.9 585 L445.7 575 L452.5 565 L459.4 555 L466.2 545 L473 535 L479.9 525 L486.7 515 L493.6 505 L500.5 495 L507.3 485 L514.2 475 L521.1 465 L528 455 L534.9 445 L541.8 435 L548.7 425 L555.7 415 L562.6 405 L569.6 395 L576.5 385 L583.5 375 L590.4 365 L597.4 355 L604.4 345 L611.4 335 L618.4 325 L625.4 315 L632.4 305 L639.4 295 L646.5 285 L653.5 275 L660.5 265 L667.6 255 L674.6 245 L681.7 235 L688.8 225 L695.8 215 L702.9 205 L710 195 L717.1 185 L724.2 175 L731.3 165 L738.4 155 L745.6 145 L752.7 135 L759.8 125 L767 115 L774.1 105 L781.3 95 M263.8 895 L270.2 885 L276.7 875 L283.2 865 L289.6 855 L296.1 845 L302.6 835 L309.2 825 L315.7 815 L322.2 805 L328.8 795 L335.3 785 L341.9 775 L348.4 765 L355 755 L361.6 745 L368.2 735 L374.8 725 L381.4 715 L388 705 L394.6 695 L401.3 685 L407.9 675 L414.6 665 L421.2 655 L427.9 645 L434.6 635 L441.3 625 L448 615 L454.7 605 L461.4 595 L468.1 585 L474.9 575 L481.6 565 L488.4 555 L495.1 545 L501.9 535 L508.6 525 L515.4 515 L522.2 505 L529 495 L535.8 485 L542.6 475 L549.5 465 L556.3 455 L563.1 445 L570 435 L576.8 425 L583.7 415 L590.5 405 L597.4 395 L604.3 385 L611.2 375 L618.1 365 L625 355 L631.9 345 L638.8 335 L645.8 325 L652.7 315 L659.7 305 L666.6 295 L673.6 285 L680.5 275 L687.5 265 L694.5 255 L701.5 245 L708.5 235 L715.5 225 L722.5 215 L729.5 205 L736.5 195 L743.6 185 L750.6 175 L757.7 165 L764.7 155 L771.8 145 L778.9 135 L785.9 125 L793 115 L800.1 105 L807.2 95 M323.2 895 L329.5 885 L335.8 875 L342.2 865 L348.5 855 L354.8 845 L361.2 835 L367.5 825 L373.9 815 L380.3 805 L386.7 795 L393.1 785 L399.5 775 L405.9 765 L412.3 755 L418.7 745 L425.2 735 L431.6 725 L438.1 715 L444.6 705 L451.1 695 L457.5 685 L464 675 L470.6 665 L477.1 655 L483.6 645 L490.1 635 L496.7 625 L503.2 615 L509.8 605 L516.4 595 L523 585 L529.5 575 L536.1 565 L542.8 555 L549.4 545 L556 535 L562.6 525 L569.3 515 L575.9 505 L582.6 495 L589.3 485 L595.9 475 L602.6 465 L609.3 455 L616 445 L622.7 435 L629.4 425 L636.2 415 L642.9 405 L649.7 395 L656.4 385 L663.2 375 L669.9 365 L676.7 355 L683.5 345 L690.3 335 L697.1 325 L703.9 315 L710.7 305 L717.6 295 L724.4 285 L731.2 275 L738.1 265 L744.9 255 L751.8 245 L758.7 235 L765.6 225 L772.4 215 L779.3 205 L786.2 195 L793.2 185 L800.1 175 L807 165 L813.9 155 L820.9 145 L827.8 135 L834.8 125 L841.8 115 L848.7 105 L855.7 95 M367 895 L373.2 885 L379.4 875 L385.6 865 L391.8 855 L398 845 L404.3 835 L410.5 825 L416.8 815 L423 805 L429.3 795 L435.6 785 L441.9 775 L448.2 765 L454.5 755 L460.8 745 L467.1 735 L473.5 725 L479.8 715 L486.2 705 L492.5 695 L498.9 685 L505.3 675 L511.7 665 L518.1 655 L524.5 645 L531 635 L537.4 625 L543.9 615 L550.3 605 L556.8 595 L563.3 585 L569.7 575 L576.2 565 L582.7 555 L589.3 545 L595.8 535 L602.3 525 L608.8 515 L615.4 505 L622 495 L628.5 485 L635.1 475 L641.7 465 L648.3 455 L654.9 445 L661.5 435 L668.1 425 L674.7 415 L681.4 405 L688 395 L694.7 385 L701.3 375 L708 365 L714.7 355 L721.4 345 L728.1 335 L734.8 325 L741.5 315 L748.2 305 L755 295 L761.7 285 L768.4 275 L775.2 265 L782 255 L788.7 245 L795.5 235 L802.3 225 L809.1 215 L815.9 205 L822.7 195 L829.5 185 L836.4 175 L843.2 165 L850.1 155 L856.9 145 L863.8 135 L870.6 125 L877.5 115 L884.4 105 L891.3 95 M431.1 895 L437.1 885 L443.1 875 L449.2 865 L455.2 855 L461.2 845 L467.3 835 L473.4 825 L479.4 815 L485.5 805 L491.6 795 L497.7 785 L503.9 775 L510 765 L516.1 755 L522.3 745 L528.4 735 L534.6 725 L540.8 715 L547 705 L553.2 695 L559.4 685 L565.6 675 L571.9 665 L578.1 655 L584.4 645 L590.7 635 L596.9 625 L603.2 615 L609.5 605 L615.8 595 L622.1 585 L628.5 575 L634.8 565 L641.2 555 L647.5 545 L653.9 535 L660.3 525 L666.6 515 L673 505 L679.5 495 L685.9 485 L692.3 475 L698.7 465 L705.2 455 L711.6 445 L718.1 435 L724.6 425 L731 415 L737.5 405 L744 395 L750.5 385 L757.1 375 L763.6 365 L770.1 355 L776.7 345 L783.2 335 L789.8 325 L796.4 315 L802.9 305 L809.5 295 L816.1 285 L822.7 275 L829.4 265 L836 255 L842.6 245 L849.3 235 L855.9 225 L862.6 215 L869.2 205 L875.9 195 L882.6 185 L889.3 175 L896 165 L902.7 155 L909.4 145 L916.2 135 L922.9 125 L929.6 115 L936.4 105 L943.2 95 M478.3 895 L484.2 885 L490.1 875 L496 865 L501.9 855 L507.8 845 L513.7 835 L519.7 825 L525.6 815 L531.6 805 L537.5 795 L543.5 785 L549.5 775 L555.5 765 L561.5 755 L567.6 745 L573.6 735 L579.6 725 L585.7 715 L591.8 705 L597.9 695 L603.9 685 L610 675 L616.2 665 L622.3 655 L628.4 645 L634.6 635 L640.7 625 L646.9 615 L653.1 605 L659.3 595 L665.5 585 L671.7 575 L677.9 565 L684.1 555 L690.4 545 L696.6 535 L702.9 525 L709.1 515 L715.4 505 L721.7 495 L728 485 L734.3 475 L740.7 465 L747 455 L753.3 445 L759.7 435 L766 425 L772.4 415 L778.8 405 L785.2 395 L791.6 385 L798 375 L804.4 365 L810.8 355 L817.3 345 L823.7 335 L830.2 325 L836.7 315 L843.1 305 L849.6 295 L856.1 285 L862.6 275 L869.1 265 L875.7 255 L882.2 245 L888.7 235 L895.3 225 L901.8 215 L908.4 205 L915 195 L921.6 185 L928.2 175 L934.8 165 L941.4 155 L948 145 L954.6 135 L961.3 125 L967.9 115 L974.6 105 L981.2 95 M547.5 895 L553.1 885 L558.8 875 L564.5 865 L570.2 855 L575.9 845 L581.6 835 L587.4 825 L593.1 815 L598.9 805 L604.7 795 L610.5 785 L616.3 775 L622.1 765 L627.9 755 L633.8 745 L639.6 735 L645.5 725 L651.3 715 L657.2 705 L663.1 695 L669 685 L675 675 L680.9 665 L686.8 655 L692.8 645 L698.8 635 L704.7 625 L710.7 615 L716.7 605 L722.7 595 L728.8 585 L734.8 575 L740.8 565 L746.9 555 L753 545 L759 535 L765.1 525 L771.2 515 L777.3 505 L783.5 495 L789.6 485 L795.7 475 L801.9 465 L808.1 455 L814.2 445 L820.4 435 L826.6 425 L832.8 415 L839 405 L845.3 395 L851.5 385 L857.8 375 L864 365 L870.3 355 L876.6 345 L882.9 335 L889.1 325 L895.5 315 L901.8 305 L908.1 295 L914.4 285 L920.8 275 L927.2 265 L933.5 255 L939.9 245 L946.3 235 L952.7 225 L959.1 215 L965.5 205 L971.9 195 L978.4 185 L984.8 175 L991.3 165 L997.7 155 L1004.2 145 L1010.7 135 L1017.2 125 L1023.7 115 L1030.2 105 L1036.7 95 M598.4 895 L603.9 885 L609.4 875 L615 865 L620.5 855 L626.1 845 L631.7 835 L637.3 825 L642.9 815 L648.5 805 L654.1 795 L659.8 785 L665.4 775 L671.1 765 L676.8 755 L682.5 745 L688.2 735 L693.9 725 L699.6 715 L705.4 705 L711.2 695 L716.9 685 L722.7 675 L728.5 665 L734.3 655 L740.1 645 L746 635 L751.8 625 L757.7 615 L763.5 605 L769.4 595 L775.3 585 L781.2 575 L787.1 565 L793 555 L799 545 L804.9 535 L810.9 525 L816.9 515 L822.8 505 L828.8 495 L834.8 485 L840.9 475 L846.9 465 L852.9 455 L859 445 L865 435 L871.1 425 L877.2 415 L883.3 405 L889.4 395 L895.5 385 L901.6 375 L907.8 365 L913.9 355 L920.1 345 L926.3 335 L932.4 325 L938.6 315 L944.8 305 L951 295 L957.3 285 L963.5 275 L969.7 265 L976 255 L982.3 245 L988.5 235 L994.8 225 L1001.1 215 L1007.4 205 L1013.7 195 L1020.1 185 L1026.4 175 L1032.7 165 L1039.1 155 L1045.4 145 L1051.8 135 L1058.2 125 L1064.6 115 L1071 105 L1077.4 95 M639 895 L644.4 885 L649.8 875 L655.2 865 L660.6 855 L666.1 845 L671.5 835 L677 825 L682.5 815 L688 805 L693.5 795 L699 785 L704.6 775 L710.1 765 L715.7 755 L721.3 745 L726.9 735 L732.5 725 L738.1 715 L743.8 705 L749.4 695 L755.1 685 L760.7 675 L766.4 665 L772.1 655 L777.8 645 L783.6 635 L789.3 625 L795 615 L800.8 605 L806.6 595 L812.4 585 L818.1 575 L824 565 L829.8 555 L835.6 545 L841.5 535 L847.3 525 L853.2 515 L859.1 505 L865 495 L870.9 485 L876.8 475 L882.7 465 L888.6 455 L894.6 445 L900.6 435 L906.5 425 L912.5 415 L918.5 405 L924.5 395 L930.5 385 L936.6 375 L942.6 365 L948.7 355 L954.7 345 L960.8 335 L966.9 325 L973 315 L979.1 305 L985.2 295 L991.3 285 L997.5 275 L1003.6 265 L1009.8 255 L1015.9 245 L1022.1 235 L1028.3 225 L1034.5 215 L1040.7 205 L1047 195 L1053.2 185 L1059.4 175 L1065.7 165 L1071.9 155 L1078.2 145 L1084.5 135 L1090.8 125 L1097.1 115 L1103.4 105 L1109.7 95 M715.2 895 L720.3 885 L725.5 875 L730.7 865 L735.9 855 L741.1 845 L746.4 835 L751.6 825 L756.9 815 L762.1 805 L767.4 795 L772.7 785 L778.1 775 L783.4 765 L788.7 755 L794.1 745 L799.5 735 L804.9 725 L810.3 715 L815.7 705 L821.1 695 L826.6 685 L832 675 L837.5 665 L843 655 L848.5 645 L854 635 L859.6 625 L865.1 615 L870.6 605 L876.2 595 L881.8 585 L887.4 575 L893 565 L898.6 555 L904.3 545 L909.9 535 L915.6 525 L921.2 515 L926.9 505 L932.6 495 L938.3 485 L944 475 L949.8 465 L955.5 455 L961.3 445 L967 435 L972.8 425 L978.6 415 L984.4 405 L990.3 395 L996.1 385 L1001.9 375 L1007.8 365 L1013.7 355 L1019.5 345 L1025.4 335 L1031.3 325 L1037.2 315 L1043.2 305 L1049.1 295 L1055.1 285 L1061 275 L1067 265 L1073 255 L1079 245 L1085 235 L1091 225 L1097 215 L1103.1 205 L1109.1 195 L1115.2 185 L1121.2 175 L1127.3 165 L1133.4 155 L1139.5 145 L1145.6 135 L1151.8 125 L1157.9 115 L1164 105 L1170.2 95 M771.1 895 L776.1 885 L781.1 875 L786.1 865 L791.2 855 L796.2 845 L801.3 835 L806.4 825 L811.5 815 L816.6 805 L821.7 795 L826.8 785 L832 775 L837.2 765 L842.3 755 L847.5 745 L852.8 735 L858 725 L863.2 715 L868.5 705 L873.8 695 L879 685 L884.3 675 L889.7 665 L895 655 L900.3 645 L905.7 635 L911.1 625 L916.5 615 L921.9 605 L927.3 595 L932.7 585 L938.1 575 L943.6 565 L949.1 555 L954.6 545 L960.1 535 L965.6 525 L971.1 515 L976.6 505 L982.2 495 L987.7 485 L993.3 475 L998.9 465 L1004.5 455 L1010.1 445 L1015.7 435 L1021.4 425 L1027 415 L1032.7 405 L1038.4 395 L1044.1 385 L1049.8 375 L1055.5 365 L1061.2 355 L1067 345 L1072.7 335 L1078.5 325 L1084.3 315 L1090.1 305 L1095.9 295 L1101.7 285 L1107.5 275 L1113.4 265 L1119.2 255 L1125.1 245 L1130.9 235 L1136.8 225 L1142.7 215 L1148.6 205 L1154.6 195 L1160.5 185 L1166.4 175 L1172.4 165 L1178.4 155 L1184.3 145 L1190.3 135 L1196.3 125 L1202.3 115 L1208.4 105 L1214.4 95 M852.6 895 L857.3 885 L862 875 L866.8 865 L871.6 855 L876.4 845 L881.2 835 L886 825 L890.8 815 L895.7 805 L900.6 795 L905.5 785 L910.4 775 L915.3 765 L920.2 755 L925.2 745 L930.2 735 L935.2 725 L940.2 715 L945.2 705 L950.2 695 L955.3 685 L960.3 675 L965.4 665 L970.5 655 L975.6 645 L980.8 635 L985.9 625 L991.1 615 L996.2 605 L1001.4 595 L1006.6 585 L1011.8 575 L1017.1 565 L1022.3 555 L1027.6 545 L1032.8 535 L1038.1 525 L1043.4 515 L1048.8 505 L1054.1 495 L1059.4 485 L1064.8 475 L1070.2 465 L1075.6 455 L1081 445 L1086.4 435 L1091.8 425 L1097.3 415 L1102.7 405 L1108.2 395 L1113.7 385 L1119.2 375 L1124.7 365 L1130.2 355 L1135.8 345 L1141.3 335 L1146.9 325 L1152.5 315 L1158.1 305 L1163.7 295 L1169.3 285 L1174.9 275 L1180.5 265 L1186.2 255 L1191.9 245 L1197.6 235 L1203.3 225 L1209 215 L1214.7 205 L1220.4 195 L1226.2 185 L1231.9 175 L1237.7 165 L1243.5 155 L1249.3 145 L1255.1 135 L1260.9 125 L1266.7 115 L1272.6 105 L1278.4 95 M912 895 L916.5 885 L921 875 L925.6 865 L930.2 855 L934.8 845 L939.4 835 L944.1 825 L948.7 815 L953.4 805 L958.1 795 L962.8 785 L967.5 775 L972.3 765 L977 755 L981.8 745 L986.6 735 L991.4 725 L996.2 715 L1001.1 705 L1005.9 695 L1010.8 685 L1015.7 675 L1020.6 665 L1025.5 655 L1030.5 645 L1035.4 635 L1040.4 625 L1045.4 615 L1050.4 605 L1055.4 595 L1060.4 585 L1065.5 575 L1070.5 565 L1075.6 555 L1080.7 545 L1085.8 535 L1091 525 L1096.1 515 L1101.3 505 L1106.4 495 L1111.6 485 L1116.8 475 L1122 465 L1127.3 455 L1132.5 445 L1137.8 435 L1143.1 425 L1148.3 415 L1153.6 405 L1159 395 L1164.3 385 L1169.6 375 L1175 365 L1180.4 355 L1185.8 345 L1191.2 335 L1196.6 325 L1202 315 L1207.5 305 L1212.9 295 L1218.4 285 L1223.9 275 L1229.4 265 L1234.9 255 L1240.4 245 L1246 235 L1251.5 225 L1257.1 215 L1262.6 205 L1268.2 195 L1273.8 185 L1279.5 175 L1285.1 165 L1290.7 155 L1296.4 145 L1302.1 135 L1307.7 125 L1313.4 115 L1319.1 105 L1324.9 95 M958.8 895 L963.2 885 L967.6 875 L972 865 L976.4 855 L980.9 845 L985.4 835 L989.8 825 L994.4 815 L998.9 805 L1003.4 795 L1008 785 L1012.6 775 L1017.2 765 L1021.8 755 L1026.4 745 L1031 735 L1035.7 725 L1040.4 715 L1045.1 705 L1049.8 695 L1054.5 685 L1059.3 675 L1064.1 665 L1068.8 655 L1073.6 645 L1078.5 635 L1083.3 625 L1088.2 615 L1093 605 L1097.9 595 L1102.8 585 L1107.7 575 L1112.7 565 L1117.6 555 L1122.6 545 L1127.6 535 L1132.5 525 L1137.6 515 L1142.6 505 L1147.6 495 L1152.7 485 L1157.8 475 L1162.9 465 L1168 455 L1173.1 445 L1178.2 435 L1183.4 425 L1188.5 415 L1193.7 405 L1198.9 395 L1204.1 385 L1209.3 375 L1214.6 365 L1219.8 355 L1225.1 345 L1230.4 335 L1235.7 325 L1241 315 L1246.3 305 L1251.7 295 L1257 285 L1262.4 275 L1267.8 265 L1273.2 255 L1278.6 245 L1284 235 L1289.4 225 L1294.9 215 L1300.4 205 L1305.8 195 L1311.3 185 L1316.8 175 L1322.4 165 L1327.9 155 L1333.4 145 L1339 135 L1344.6 125 L1350.2 115 L1355.8 105 L1361.4 95" stroke="#8c8c8c" stroke-width="1" stroke-dasharray="7.5 3.5 1.5 4" fill="none"/>
<text x="144" y="407.6" font-size="15" fill="#a4a4a4">FL&#160;&#160;300</text>
<text x="144" y="515.6" font-size="15" fill="#a4a4a4">FL&#160;&#160;240</text>
<text x="144" y="618.3" font-size="15" fill="#a4a4a4">FL&#160;&#160;180</text>
<text x="144" y="748" font-size="15" fill="#a4a4a4">FL&#160;&#160;100</text>
<text x="144" y="825.2" font-size="15" fill="#a4a4a4">FL&#160;&#160;50</text>
<text x="147" y="882.5" font-size="14" fill="#aaa" text-anchor="middle">.4</text>
<text x="192" y="882.5" font-size="14" fill="#aaa" text-anchor="middle">0.6</text>
<text x="232" y="882.5" font-size="14" fill="#aaa" text-anchor="middle">0.8</text>
<text x="264" y="882.5" font-size="14" fill="#aaa" text-anchor="middle">1</text>
<text x="323" y="882.5" font-size="14" fill="#aaa" text-anchor="middle">1.5</text>
<text x="368" y="882.5" font-size="14" fill="#aaa" text-anchor="middle">2</text>
<text x="431" y="882.5" font-size="14" fill="#aaa" text-anchor="middle">3</text>
<text x="477" y="882.5" font-size="14" fill="#aaa" text-anchor="middle">4</text>
<text x="547.5" y="882.5" font-size="14" fill="#aaa" text-anchor="middle">6</text>
<text x="598.5" y="882.5" font-size="14" fill="#aaa" text-anchor="middle">8</text>
<text x="640" y="882.5" font-size="14" fill="#aaa" text-anchor="middle">10</text>
<text x="716.5" y="882.5" font-size="14" fill="#aaa" text-anchor="middle">15</text>
<text x="770.5" y="882.5" font-size="14" fill="#aaa" text-anchor="middle">20</text>
<text x="852.5" y="882.5" font-size="14" fill="#aaa" text-anchor="middle">30</text>
<text x="912" y="882.5" font-size="14" fill="#aaa" text-anchor="middle">40</text>
<text x="958" y="882.5" font-size="14" fill="#aaa" text-anchor="middle">50</text>
<path d="M423 237.5 L422.5 238.8 L415 253.8 L412 272.5 L412 273.5 L412.7 273.5 L415.5 277.1 L419.9 282.5 L424.2 287.9 L428.5 293.2 L432.8 298.4 L437 303.6 L441.2 308.7 L445.3 313.7 L449.4 318.7 L453.4 323.6 L457.4 328.4 L461.4 333.2 L465.3 338 L469.2 342.6 L473 347.3 L476.8 351.9 L480.6 356.4 L484.3 360.9 L487.9 365.3 L491.6 369.7 L495.1 374 L498.7 378.3 L502.1 382.5 L505.6 386.7 L508.9 390.9 L512.3 395 L515.6 399.1 L518.9 403.1 L522.1 407.1 L525.4 411.1 L528.5 415 L531.7 418.9 L534.8 422.7 L537.8 426.5 L540.8 430.3 L543.7 434 L546.6 437.7 L549.5 441.4 L552.3 445 L555.1 448.6 L557.8 452.2 L560.5 455.7 L563.1 459.2 L565.7 462.7 L568.3 466.2 L570.8 469.6 L573.2 473 L575.7 476.3 L578.1 479.7 L580.4 483 L582.7 486.3 L585 489.5 L587.2 492.7 L589.4 495.9 L591.6 499.1 L593.7 502.3 L595.8 505.4 L597.8 508.5 L599.8 511.6 L601.8 514.7 L603.7 517.7 L605.6 520.7 L607.5 523.7 L609.3 526.7 L611.1 529.6 L612.9 532.5 L614.7 535.4 L616.4 538.3 L618.1 541.2 L619.7 544 L621.3 546.9 L622.9 549.7 L624.5 552.4 L626.1 555.2 L627.6 558 L629.1 560.7 L630.5 563.4 L632 566.1 L633.4 568.8 L634.8 571.4 L636.1 574.1 L637.5 576.7 L638.8 579.3 L640.1 581.9 L641.3 584.5 L642.6 587 L643.8 589.6 L645 592.1 L646.2 594.6 L647.4 597.1 L648.5 599.6 L649.6 602 L650.7 604.5 L651.8 606.9 L652.9 609.3 L653.9 611.7 L655 614.1 L656 616.5 L657 618.9 L658 621.2 L658.9 623.5 L659.9 625.9 L660.8 628.2 L661.7 630.5 L662.6 632.8 L663.5 635 L664.4 637.3 L665.3 639.5 L666.1 641.8 L666.9 644 L667.7 646.2 L668.5 648.4 L669.3 650.6 L670.1 652.8 L670.9 654.9 L671.6 657.1 L672.4 659.2 L673.1 661.3 L673.8 663.4 L674.5 665.5 L675.2 667.6 L675.9 669.7 L676.6 671.8 L677.2 673.9 L677.9 675.9 L678.5 678 L679.2 680 L679.8 682 L680.4 684 L681 686 L681.6 688 L682.2 690 L682.8 692 L683.3 693.9 L683.9 695.9 L684.4 697.8 L685 699.8 L685.5 701.7 L686 703.6 L686.6 705.5 L687.1 707.4 L687.6 709.3 L688.1 711.2 L688.5 713.1 L689 714.9 L689.5 716.8 L690 718.6 L690.4 720.5 L690.9 722.3 L691.3 724.1 L691.8 725.9 L692.2 727.7 L692.6 729.5 L693 731.3 L693.5 733.1 L693.9 734.9 L694.3 736.6 L694.7 738.4 L695.1 740.1 L695.4 741.9 L695.8 743.6 L696.2 745.3 L696.6 747.1 L696.9 748.8 L697.3 750.5 L697.6 752.2 L698 753.9 L698.3 755.6 L698.7 757.2 L699 758.9 L699.3 760.6 L699.7 762.2 L700 763.9 L700.3 765.5 L700.6 767.2 L700.9 768.8 L701.2 770.4 L701.5 772 L701.8 773.7 L702.1 775.3 L702.4 776.9 L702.7 778.4 L703 780 L703.2 781.6 L703.5 783.2 L703.8 784.8 L704 786.3 L704.3 787.9 L704.6 789.4 L704.8 791 L705.1 792.5 L705.3 794 L705.5 795.6 L705.6 796 L704.8 796 L705 796.2 L715 815 L720.7 827.3 L728 835.5 L728 835.5 L727.9 834.1 L727.7 832.7 L727.6 831.3 L727.5 829.9 L727.3 828.5 L727.2 827.1 L727 825.7 L726.9 824.3 L726.8 822.9 L726.6 821.5 L726.5 820 L726.3 818.6 L726.1 817.1 L726 815.7 L725.8 814.2 L725.7 812.8 L725.5 811.3 L725.3 809.9 L725.2 808.4 L725 806.9 L724.8 805.4 L724.7 803.9 L724.5 802.4 L724.3 800.9 L724.1 799.4 L723.9 797.9 L723.7 796.4 L723.5 794.9 L723.3 793.3 L723.1 791.8 L722.9 790.3 L722.7 788.7 L722.5 787.2 L722.3 785.6 L722.1 784 L721.9 782.5 L721.7 780.9 L721.5 779.3 L721.2 777.7 L721 776.1 L720.8 774.5 L720.5 772.9 L720.3 771.3 L720 769.7 L719.8 768.1 L719.6 766.4 L719.3 764.8 L719 763.1 L718.8 761.5 L718.5 759.8 L718.2 758.2 L718 756.5 L717.7 754.8 L717.4 753.1 L717.1 751.4 L716.8 749.7 L716.5 748 L716.2 746.3 L715.9 744.6 L715.6 742.8 L715.3 741.1 L715 739.3 L714.7 737.6 L714.3 735.8 L714 734.1 L713.7 732.3 L713.3 730.5 L713 728.7 L712.6 726.9 L712.3 725.1 L711.9 723.3 L711.5 721.5 L711.1 719.6 L710.8 717.8 L710.4 715.9 L710 714.1 L709.6 712.2 L709.2 710.3 L708.8 708.4 L708.3 706.5 L707.9 704.6 L707.5 702.7 L707 700.8 L706.6 698.9 L706.1 696.9 L705.7 695 L705.2 693 L704.7 691.1 L704.2 689.1 L703.7 687.1 L703.2 685.1 L702.7 683.1 L702.2 681.1 L701.7 679.1 L701.1 677 L700.6 675 L700 672.9 L699.5 670.9 L698.9 668.8 L698.3 666.7 L697.7 664.6 L697.1 662.5 L696.5 660.4 L695.9 658.2 L695.2 656.1 L694.6 653.9 L693.9 651.8 L693.3 649.6 L692.6 647.4 L691.9 645.2 L691.2 643 L690.5 640.8 L689.7 638.5 L689 636.3 L688.2 634 L687.5 631.7 L686.7 629.4 L685.9 627.1 L685.1 624.8 L684.3 622.5 L683.4 620.1 L682.6 617.8 L681.7 615.4 L680.8 613 L679.9 610.6 L679 608.2 L678.1 605.8 L677.1 603.4 L676.2 600.9 L675.2 598.4 L674.2 596 L673.1 593.5 L672.1 590.9 L671 588.4 L670 585.9 L668.9 583.3 L667.7 580.7 L666.6 578.1 L665.4 575.5 L664.3 572.9 L663 570.2 L661.8 567.6 L660.6 564.9 L659.3 562.2 L658 559.5 L656.7 556.7 L655.3 554 L653.9 551.2 L652.5 548.4 L651.1 545.6 L649.6 542.7 L648.2 539.9 L646.6 537 L645.1 534.1 L643.5 531.2 L641.9 528.3 L640.3 525.3 L638.6 522.3 L636.9 519.3 L635.2 516.3 L633.4 513.3 L631.6 510.2 L629.8 507.1 L627.9 504 L626 500.8 L624.1 497.7 L622.1 494.5 L620.1 491.3 L618 488 L616 484.8 L613.8 481.5 L611.6 478.2 L609.4 474.8 L607.2 471.4 L604.9 468 L602.5 464.6 L600.2 461.1 L597.7 457.6 L595.2 454.1 L592.7 450.6 L590.2 447 L587.6 443.4 L584.9 439.7 L582.2 436 L579.4 432.3 L576.6 428.6 L573.8 424.8 L570.9 421 L567.9 417.1 L564.9 413.2 L561.9 409.3 L558.7 405.3 L555.6 401.3 L552.4 397.2 L549.2 393.1 L546 389 L542.7 384.8 L539.3 380.6 L535.9 376.4 L532.5 372 L529 367.7 L525.4 363.3 L521.8 358.8 L518.2 354.3 L514.4 349.8 L510.7 345.2 L506.9 340.5 L503 335.8 L499.1 331 L495.1 326.2 L491.1 321.3 L487 316.4 L482.9 311.4 L478.8 306.3 L474.5 301.2 L470.3 296 L466 290.8 L461.6 285.4 L457.2 280 L452.8 274.6 L448.3 269 L443.7 263.4 L439.2 257.7 L434.5 251.9 L429.8 246 L425 240.1 L422.9 237.5Z" fill="#ff0000" fill-opacity="0.5" stroke="none"/>
<path d="M412 273.5 L411.5 290 L413 305 L422.5 332.5 L437.5 362.5 L458 390 L477.5 413.8 L512.5 458.8 L552.5 512.5 L565 535 L576.2 560 L591.2 582.5 L602.5 606.2 L617.5 640 L630 665 L642.5 690 L652.5 715 L655 726.2 L661.2 741.2 L677.5 757.5 L692.5 777.5 L704.8 796 L705.6 796 L705.5 795.6 L705.3 794 L705.1 792.5 L704.8 791 L704.6 789.4 L704.3 787.9 L704 786.3 L703.8 784.8 L703.5 783.2 L703.2 781.6 L703 780 L702.7 778.4 L702.4 776.9 L702.1 775.3 L701.8 773.7 L701.5 772 L701.2 770.4 L700.9 768.8 L700.6 767.2 L700.3 765.5 L700 763.9 L699.7 762.2 L699.3 760.6 L699 758.9 L698.7 757.2 L698.3 755.6 L698 753.9 L697.6 752.2 L697.3 750.5 L696.9 748.8 L696.6 747.1 L696.2 745.3 L695.8 743.6 L695.4 741.9 L695.1 740.1 L694.7 738.4 L694.3 736.6 L693.9 734.9 L693.5 733.1 L693 731.3 L692.6 729.5 L692.2 727.7 L691.8 725.9 L691.3 724.1 L690.9 722.3 L690.4 720.5 L690 718.6 L689.5 716.8 L689 714.9 L688.5 713.1 L688.1 711.2 L687.6 709.3 L687.1 707.4 L686.6 705.5 L686 703.6 L685.5 701.7 L685 699.8 L684.4 697.8 L683.9 695.9 L683.3 693.9 L682.8 692 L682.2 690 L681.6 688 L681 686 L680.4 684 L679.8 682 L679.2 680 L678.5 678 L677.9 675.9 L677.2 673.9 L676.6 671.8 L675.9 669.7 L675.2 667.6 L674.5 665.5 L673.8 663.4 L673.1 661.3 L672.4 659.2 L671.6 657.1 L670.9 654.9 L670.1 652.8 L669.3 650.6 L668.5 648.4 L667.7 646.2 L666.9 644 L666.1 641.8 L665.3 639.5 L664.4 637.3 L663.5 635 L662.6 632.8 L661.7 630.5 L660.8 628.2 L659.9 625.9 L658.9 623.5 L658 621.2 L657 618.9 L656 616.5 L655 614.1 L653.9 611.7 L652.9 609.3 L651.8 606.9 L650.7 604.5 L649.6 602 L648.5 599.6 L647.4 597.1 L646.2 594.6 L645 592.1 L643.8 589.6 L642.6 587 L641.3 584.5 L640.1 581.9 L638.8 579.3 L637.5 576.7 L636.1 574.1 L634.8 571.4 L633.4 568.8 L632 566.1 L630.5 563.4 L629.1 560.7 L627.6 558 L626.1 555.2 L624.5 552.4 L622.9 549.7 L621.3 546.9 L619.7 544 L618.1 541.2 L616.4 538.3 L614.7 535.4 L612.9 532.5 L611.1 529.6 L609.3 526.7 L607.5 523.7 L605.6 520.7 L603.7 517.7 L601.8 514.7 L599.8 511.6 L597.8 508.5 L595.8 505.4 L593.7 502.3 L591.6 499.1 L589.4 495.9 L587.2 492.7 L585 489.5 L582.7 486.3 L580.4 483 L578.1 479.7 L575.7 476.3 L573.2 473 L570.8 469.6 L568.3 466.2 L565.7 462.7 L563.1 459.2 L560.5 455.7 L557.8 452.2 L555.1 448.6 L552.3 445 L549.5 441.4 L546.6 437.7 L543.7 434 L540.8 430.3 L537.8 426.5 L534.8 422.7 L531.7 418.9 L528.5 415 L525.4 411.1 L522.1 407.1 L518.9 403.1 L515.6 399.1 L512.3 395 L508.9 390.9 L505.6 386.7 L502.1 382.5 L498.7 378.3 L495.1 374 L491.6 369.7 L487.9 365.3 L484.3 360.9 L480.6 356.4 L476.8 351.9 L473 347.3 L469.2 342.6 L465.3 338 L461.4 333.2 L457.4 328.4 L453.4 323.6 L449.4 318.7 L445.3 313.7 L441.2 308.7 L437 303.6 L432.8 298.4 L428.5 293.2 L424.2 287.9 L419.9 282.5 L415.5 277.1 L412.7 273.5Z" fill="#ff0000" fill-opacity="0.75" stroke="none"/>
<path d="M535 113 L493.5 145.5 L457.3 173.8 L439.8 201.2 L426 225 L421 238.8 L412.5 253.8 L409.5 272.5 L408.8 282.5 L410.5 307.5 L420 333.8 L433.8 362.5 L450 390 L465 411.2 L495 457.5 L522.5 510 L523.8 515 L537.5 550 L552.5 582.5 L566.2 606.2 L583.8 627.5 L588.8 640 L593.8 650 L605 680 L622.5 712.5 L650 742.5 L658.8 760 L667.5 792.5 L671.1 800 L680.2 817.2 L689.4 835.4 L696.4 850.6 L703.5 857.7 L714.2 862.8" stroke="#000" stroke-width="1" fill="none"/>
<path d="M536.7 113 L495 145.5 L458.8 173.8 L441.2 201.2 L427.5 225 L422.5 238.8 L415 253.8 L412 272.5 L411.5 290 L413 305 L422.5 332.5 L437.5 362.5 L458 390 L477.5 413.8 L512.5 458.8 L552.5 512.5 L565 535 L576.2 560 L591.2 582.5 L602.5 606.2 L617.5 640 L630 665 L642.5 690 L652.5 715 L655 726.2 L661.2 741.2 L677.5 757.5 L692.5 777.5 L705 796.2 L715 815 L720.7 827.3 L728 835.5 L733.9 842.5 L736.4 851.6 L737.9 860.7 L739.5 870.9 L743 876.9 L753.1 887" stroke="#000" stroke-width="1.9" fill="none" stroke-linejoin="round"/>
<path d="M728 835.5 L733.9 842.5 L736.4 851.6 L737.9 860.7 L739.5 870.9 L743 876.9 L753.1 887" stroke="#000" stroke-width="2.7" fill="none" stroke-linejoin="round"/>
<path d="M236 113 L261.2 147.5 L295.5 174.5 L296.2 197.5 L290 227.5 L284.5 234.5 L287.5 253.8 L288 280 L288 332.5 L282.5 360 L273.8 399.2 L270 411.2 L253.8 461.2 L258.8 485 L265 515 L277 534.5 L353.8 559.5 L395 582.5 L462.5 606.2 L522.5 628.8 L543.8 648.8 L551.2 668.8 L558.8 685 L582.5 706.2 L615 725 L636.2 741.2 L645 756.2 L647 770 L647 785 L650 797.5 L660 812 L668.1 827.3 L678.2 844.5 L685.3 852.1 L692.4 855.7 L705.5 863.3 L716.7 869.8 L723.3 873.4 L724.8 880 L724.3 887" stroke="#000" stroke-width="2.4" stroke-dasharray="10 6" fill="none"/>
<g fill="#000"><circle cx="261.2" cy="147.5" r="1.7"/><circle cx="295.5" cy="174.5" r="1.7"/><circle cx="296.2" cy="197.5" r="1.7"/><circle cx="290" cy="227.5" r="1.7"/><circle cx="284.5" cy="234.5" r="1.7"/><circle cx="287.5" cy="253.8" r="1.7"/><circle cx="288" cy="280" r="1.7"/><circle cx="288" cy="332.5" r="1.7"/><circle cx="282.5" cy="360" r="1.7"/><circle cx="273.8" cy="399.2" r="1.7"/><circle cx="270" cy="411.2" r="1.7"/><circle cx="253.8" cy="461.2" r="1.7"/><circle cx="258.8" cy="485" r="1.7"/><circle cx="265" cy="515" r="1.7"/><circle cx="277" cy="534.5" r="1.7"/><circle cx="353.8" cy="559.5" r="1.7"/><circle cx="395" cy="582.5" r="1.7"/><circle cx="462.5" cy="606.2" r="1.7"/><circle cx="522.5" cy="628.8" r="1.7"/><circle cx="543.8" cy="648.8" r="1.7"/><circle cx="551.2" cy="668.8" r="1.7"/><circle cx="558.8" cy="685" r="1.7"/><circle cx="582.5" cy="706.2" r="1.7"/><circle cx="615" cy="725" r="1.7"/><circle cx="636.2" cy="741.2" r="1.7"/><circle cx="645" cy="756.2" r="1.7"/><circle cx="647" cy="770" r="1.7"/><circle cx="647" cy="785" r="1.7"/><circle cx="650" cy="797.5" r="1.7"/><circle cx="660" cy="812" r="1.7"/><circle cx="668.1" cy="827.3" r="1.7"/><circle cx="678.2" cy="844.5" r="1.7"/><circle cx="685.3" cy="852.1" r="1.7"/><circle cx="692.4" cy="855.7" r="1.7"/><circle cx="705.5" cy="863.3" r="1.7"/><circle cx="716.7" cy="869.8" r="1.7"/><circle cx="723.3" cy="873.4" r="1.7"/><circle cx="724.8" cy="880" r="1.7"/><circle cx="724.3" cy="887" r="1.7"/></g>
<path d="M714.2 862.8 L713.8 858.9 L713.4 855 L713 851 L712.5 847 L712 843 L711.6 838.9 L711.1 834.7 L710.5 830.6 L710 826.4 L709.4 822.1 L708.8 817.8 L708.2 813.4 L707.6 809.1 L706.9 804.6 L706.3 800.1 L705.5 795.6 L704.8 791 L704 786.3 L703.2 781.6 L702.4 776.9 L701.5 772 L700.6 767.2 L699.7 762.2 L698.7 757.2 L697.6 752.2 L696.6 747.1 L695.4 741.9 L694.3 736.6 L693 731.3 L691.8 725.9 L690.4 720.5 L689 714.9 L687.6 709.3 L686 703.6 L684.4 697.8 L682.8 692 L681 686 L679.2 680 L677.2 673.9 L675.2 667.6 L673.1 661.3 L670.9 654.9 L668.5 648.4 L666.1 641.8 L663.5 635 L660.8 628.2 L658 621.2 L655 614.1 L651.8 606.9 L648.5 599.6 L645 592.1 L641.3 584.5 L637.5 576.7 L633.4 568.8 L629.1 560.7 L624.5 552.4 L619.7 544 L614.7 535.4 L609.3 526.7 L603.7 517.7 L597.8 508.5 L591.6 499.1 L585 489.5 L578.1 479.7 L570.8 469.6 L563.1 459.2 L555.1 448.6 L546.6 437.7 L537.8 426.5 L528.5 415 L518.9 403.1 L508.9 390.9 L498.7 378.3 L487.9 365.3 L476.8 351.9 L465.3 338 L453.4 323.6 L441.2 308.7 L428.5 293.2 L415.5 277.1 L402.2 260.3 L388.4 242.8 L374 224.5 L359.4 205.4 L344.4 185.3 L329.1 164.1 L313.5 141.8 L297.6 118.2 L294.2 113" stroke="#0000f0" stroke-width="1.5" fill="none"/>
<path d="M728 835.5 L727.6 831.3 L727.2 827.1 L726.8 822.9 L726.3 818.6 L725.8 814.2 L725.3 809.9 L724.8 805.4 L724.3 800.9 L723.7 796.4 L723.1 791.8 L722.5 787.2 L721.9 782.5 L721.2 777.7 L720.5 772.9 L719.8 768.1 L719 763.1 L718.2 758.2 L717.4 753.1 L716.5 748 L715.6 742.8 L714.7 737.6 L713.7 732.3 L712.6 726.9 L711.5 721.5 L710.4 715.9 L709.2 710.3 L707.9 704.6 L706.6 698.9 L705.2 693 L703.7 687.1 L702.2 681.1 L700.6 675 L698.9 668.8 L697.1 662.5 L695.2 656.1 L693.3 649.6 L691.2 643 L689 636.3 L686.7 629.4 L684.3 622.5 L681.7 615.4 L679 608.2 L676.2 600.9 L673.1 593.5 L670 585.9 L666.6 578.1 L663 570.2 L659.3 562.2 L655.3 554 L651.1 545.6 L646.6 537 L641.9 528.3 L636.9 519.3 L631.6 510.2 L626 500.8 L620.1 491.3 L613.8 481.5 L607.2 471.4 L600.2 461.1 L592.7 450.6 L584.9 439.7 L576.6 428.6 L567.9 417.1 L558.7 405.3 L549.2 393.1 L539.3 380.6 L529 367.7 L518.2 354.3 L506.9 340.5 L495.1 326.2 L482.9 311.4 L470.3 296 L457.2 280 L443.7 263.4 L429.8 246 L415.2 227.9 L400.3 208.9 L384.9 189 L369.3 168.1 L353.2 146 L336.8 122.6 L330.2 113" stroke="#0000f0" stroke-width="2.2" fill="none"/>
<path d="M714.2 862.8 L753.1 887" stroke="#0000f0" stroke-width="1.6" fill="none"/>
<path d="M728 835.5 L807.3 887" stroke="#0000f0" stroke-width="1.6" fill="none"/>
<path d="M702.5 886 L728 835.5" stroke="#0000f0" stroke-width="2" stroke-dasharray="9.5 8" fill="none"/>
<path d="M728 835.5 H767.3 M714.2 862.8 H754.1" stroke="#000" stroke-width="1.7" fill="none"/>
<text x="776.5" y="845.5" font-size="18" font-weight="bold" fill="#000">KKN</text>
<text x="762.5" y="871.5" font-size="18" font-weight="bold" fill="#000">HKN</text>
<path d="M924.5 155 L895 193.8 M895 193.8 l-22.5 -3 M901.1 185.8 l-22.5 -3 M907.1 177.8 l-22.5 -3 M913.2 169.9 l-22.5 -3 M919.2 161.9 l-10.1 -1.4 M923.8 207 L895.5 248 M895.5 248 l-22 -2 M901.2 239.8 l-22 -2 M906.8 231.5 l-22 -2 M912.5 223.3 l-22 -2 M924.5 261.2 L894.5 301.2 M894.5 301.2 l-22 -3 M900.5 293.2 l-22 -3 M906.5 285.2 l-22 -3 M912.5 277.2 l-22 -3 M922.5 312 L897.5 355 M897.5 355 l-22.5 -0.5 M902.5 346.4 l-22.5 -0.5 M907.6 337.7 l-22.5 -0.5 M912.6 329.1 l-22.5 -0.5 M917.6 320.4 l-10.1 -0.2 M922.5 365.5 L897 407 M897 407 l-23 -1.5 M902.2 398.5 l-23 -1.5 M907.5 390 l-23 -1.5 M912.7 381.4 l-23 -1.5 M925.5 418 L893.8 455.5 M893.8 455.5 l-22 -5 M900.2 447.9 l-22 -5 M906.7 440.2 l-22 -5 M913.1 432.6 l-9.9 -2.2 M925.5 467 L893.2 505 M893.2 505 l-21.5 -4.5 M899.7 497.4 l-21.5 -4.5 M906.2 489.8 l-21.5 -4.5 M912.7 482.1 l-9.7 -2 M924.5 496 L894.5 536.2 M894.5 536.2 l-22 -3.2 M900.5 528.2 l-22 -3.2 M906.5 520.2 l-22 -3.2 M912.4 512.2 l-9.9 -1.4 M922.5 537.5 L898 581.2 M898 581.2 l-23 -1.2 M902.9 572.5 l-23 -1.2 M907.8 563.8 l-23 -1.2 M912.7 555.1 l-23 -1.2 M919.5 583 L899.5 628.8 M899.5 628.8 l-22 2 M903.5 619.6 l-22 2 M907.5 610.4 l-22 2 M911.5 601.3 l-22 2 M917.5 626 L902.5 673 M902.5 673 l-23 4.5 M905.5 663.5 l-23 4.5 M908.6 653.9 l-23 4.5 M911.6 644.4 l-10.3 2 M917.5 656 L901 704.5 M901 704.5 l-22 3 M904.2 695 l-22 3 M907.4 685.6 l-22 3 M910.7 676.1 l-9.9 1.4 M917.5 701 L901 748.8 M901 748.8 l-22 3.7 M904.3 739.3 l-22 3.7 M907.5 729.8 l-22 3.7 M916 733 L903.8 780 M903.8 780 l-23 5.5 M906.3 770.3 l-23 5.5 M908.8 760.6 l-10.3 2.5 M912.5 772.5 L907 820 M907 820 l-22 9.2 M908.2 810.1 l-22 9.2 M909.3 800.1 l-9.9 4.1 M913 804.5 L907 852.5 M907 852.5 l-21.8 7.5 M908.2 842.6 l-21.8 7.5 M907.5 837.5 L911 883.8 M909.8 867.8 l-8.3 3.8 M890 873 L920 894.5 M893.5 894.5 L912.5 881" stroke="#111" stroke-width="1.4" fill="none" stroke-linecap="butt"/>
</g>
<path d="M135 113 V898" stroke="#222" stroke-width="2" fill="none"/>
<path d="M134 895 H972" stroke="#222" stroke-width="2" fill="none"/>
<text x="124" y="126.3" font-size="15" fill="#222" stroke="#222" stroke-width="0.45" text-anchor="end">150</text>
<text x="124" y="242.9" font-size="15" fill="#222" stroke="#222" stroke-width="0.45" text-anchor="end">200</text>
<text x="124" y="333.3" font-size="15" fill="#222" stroke="#222" stroke-width="0.45" text-anchor="end">250</text>
<text x="124" y="407.2" font-size="15" fill="#222" stroke="#222" stroke-width="0.45" text-anchor="end">300</text>
<text x="124" y="523.8" font-size="15" fill="#222" stroke="#222" stroke-width="0.45" text-anchor="end">400</text>
<text x="124" y="614.3" font-size="15" fill="#222" stroke="#222" stroke-width="0.45" text-anchor="end">500</text>
<text x="124" y="688.2" font-size="15" fill="#222" stroke="#222" stroke-width="0.45" text-anchor="end">600</text>
<text x="124" y="750.6" font-size="15" fill="#222" stroke="#222" stroke-width="0.45" text-anchor="end">700</text>
<text x="124" y="804.8" font-size="15" fill="#222" stroke="#222" stroke-width="0.45" text-anchor="end">800</text>
<text x="124" y="852.5" font-size="15" fill="#222" stroke="#222" stroke-width="0.45" text-anchor="end">900</text>
<text x="124" y="895.2" font-size="15" fill="#222" stroke="#222" stroke-width="0.45" text-anchor="end">1000</text>
<text x="225.1" y="921" font-size="15" fill="#222" stroke="#222" stroke-width="0.45" text-anchor="middle">-20</text>
<text x="346.3" y="921" font-size="15" fill="#222" stroke="#222" stroke-width="0.45" text-anchor="middle">-10</text>
<text x="468.3" y="921" font-size="15" fill="#222" stroke="#222" stroke-width="0.45" text-anchor="middle">0</text>
<text x="589.5" y="921" font-size="15" fill="#222" stroke="#222" stroke-width="0.45" text-anchor="middle">10</text>
<text x="710.7" y="921" font-size="15" fill="#222" stroke="#222" stroke-width="0.45" text-anchor="middle">20</text>
<text x="831.9" y="921" font-size="15" fill="#222" stroke="#222" stroke-width="0.45" text-anchor="middle">30</text>
<text x="953.1" y="921" font-size="15" fill="#222" stroke="#222" stroke-width="0.45" text-anchor="middle">40</text>
<text x="551" y="952" font-size="15.7" fill="#444" text-anchor="middle">Temperature (°C)</text>
<text transform="translate(64.5 506) rotate(-90)" font-size="22" fill="#444" text-anchor="middle">Pressure (hPa)</text>
<rect x="42" y="113" width="930" height="32" fill="#c0c0c0" fill-opacity="0.88" stroke="#000" stroke-width="2"/>
<path d="M48.5 129.5 L59 114.5 L82.3 143.5 L104.5 114 L127.7 143.5 L138.5 129.5" stroke="#000" stroke-width="1.6" fill="none"/>
<text x="149" y="134" font-size="16.6" fill="#000" textLength="773" lengthAdjust="spacingAndGlyphs">N 39°05 O 009°41, Di 12 Okt 2010 12:00 (COSMO_S6.6_Europe (G) , 12 Okt 2010 06 UTC +6h)</text>
<g clip-path="url(#cw)">
<path d="M995.5 113 V895 M1015.5 113 V895 M1036.5 113 V895 M1056.5 113 V895 M1097.5 113 V895 M1117.5 113 V895 M1138.5 113 V895 M1158.5 113 V895 M1199.5 113 V895 M1219.5 113 V895 M1240.5 113 V895 M1260.5 113 V895" stroke="#999" stroke-width="1" stroke-dasharray="9 6" fill="none"/>
<path d="M1077.5 113 V895 M1179.5 113 V895 M1280.5 113 V895" stroke="#868686" stroke-width="1" fill="none"/>
<path d="M978 115.5 H1283 M978 232.5 H1283 M978 322.5 H1283 M978 396.5 H1283 M978 513.5 H1283 M978 604.5 H1283 M978 677.5 H1283 M978 740.5 H1283 M978 794.5 H1283 M978 842.5 H1283 M978 885.5 H1283" stroke="#868686" stroke-width="1" fill="none"/>
<text x="985" y="405.2" font-size="15" fill="#a4a4a4">FL&#160;&#160;300</text>
<text x="985" y="513.3" font-size="15" fill="#a4a4a4">FL&#160;&#160;240</text>
<text x="985" y="616.2" font-size="15" fill="#a4a4a4">FL&#160;&#160;180</text>
<text x="985" y="746.1" font-size="15" fill="#a4a4a4">FL&#160;&#160;100</text>
<text x="985" y="823.5" font-size="15" fill="#a4a4a4">FL&#160;&#160;50</text>
<path d="M1085 113 L1075.1 144.3 L1067.1 171.4 L1058 198.6 L1054.6 224.9 L1054.6 231.4 L1056.6 251.4 L1060.3 278 L1063.7 304.6 L1063.7 330.9 L1060.9 357.1 L1056.3 382.9 L1052.9 397.1 L1049.4 408.6 L1047.4 433.7 L1049.4 459.1 L1051.1 483.7 L1050.6 508.6 L1050.6 513.4 L1050.6 532.9 L1052.9 556.6 L1054.9 580.6 L1055.7 603.7 L1049.1 625.7 L1043.4 647.1 L1042.6 668 L1042.6 677.7 L1042.6 687.4 L1041.4 705.7 L1037.7 723.4 L1032.9 740.9 L1028.6 755.1 L1026.6 769.1 L1024.9 782.3 L1023.4 794.9 L1020.9 806.6 L1020.3 817.1 L1020.3 826.6 L1021.4 835.7 L1022.9 843.7 L1025.7 850.9 L1027.7 857.1 L1026.3 862.9 L1024.9 867.7 L1024.6 872 L1024.3 876.3 L1021.4 880 L1017.1 882.6 L1012.9 884.3 L1009.1 885.7" stroke="#111" stroke-width="1.1" fill="none"/>
<g fill="#111"><circle cx="1067.1" cy="171.4" r="1.5"/><circle cx="1058" cy="198.6" r="1.5"/><circle cx="1054.6" cy="224.9" r="1.5"/><circle cx="1054.6" cy="231.4" r="1.5"/><circle cx="1056.6" cy="251.4" r="1.5"/><circle cx="1060.3" cy="278" r="1.5"/><circle cx="1063.7" cy="304.6" r="1.5"/><circle cx="1063.7" cy="330.9" r="1.5"/><circle cx="1060.9" cy="357.1" r="1.5"/><circle cx="1056.3" cy="382.9" r="1.5"/><circle cx="1052.9" cy="397.1" r="1.5"/><circle cx="1049.4" cy="408.6" r="1.5"/><circle cx="1047.4" cy="433.7" r="1.5"/><circle cx="1049.4" cy="459.1" r="1.5"/><circle cx="1051.1" cy="483.7" r="1.5"/><circle cx="1050.6" cy="508.6" r="1.5"/><circle cx="1050.6" cy="513.4" r="1.5"/><circle cx="1050.6" cy="532.9" r="1.5"/><circle cx="1052.9" cy="556.6" r="1.5"/><circle cx="1054.9" cy="580.6" r="1.5"/><circle cx="1055.7" cy="603.7" r="1.5"/><circle cx="1049.1" cy="625.7" r="1.5"/><circle cx="1043.4" cy="647.1" r="1.5"/><circle cx="1042.6" cy="668" r="1.5"/><circle cx="1042.6" cy="677.7" r="1.5"/><circle cx="1042.6" cy="687.4" r="1.5"/><circle cx="1041.4" cy="705.7" r="1.5"/><circle cx="1037.7" cy="723.4" r="1.5"/><circle cx="1032.9" cy="740.9" r="1.5"/><circle cx="1028.6" cy="755.1" r="1.5"/><circle cx="1026.6" cy="769.1" r="1.5"/><circle cx="1024.9" cy="782.3" r="1.5"/><circle cx="1023.4" cy="794.9" r="1.5"/><circle cx="1020.9" cy="806.6" r="1.5"/><circle cx="1020.3" cy="817.1" r="1.5"/><circle cx="1020.3" cy="826.6" r="1.5"/><circle cx="1021.4" cy="835.7" r="1.5"/><circle cx="1022.9" cy="843.7" r="1.5"/><circle cx="1025.7" cy="850.9" r="1.5"/><circle cx="1027.7" cy="857.1" r="1.5"/><circle cx="1026.3" cy="862.9" r="1.5"/><circle cx="1024.9" cy="867.7" r="1.5"/><circle cx="1024.6" cy="872" r="1.5"/><circle cx="1024.3" cy="876.3" r="1.5"/><circle cx="1021.4" cy="880" r="1.5"/><circle cx="1017.1" cy="882.6" r="1.5"/><circle cx="1012.9" cy="884.3" r="1.5"/><circle cx="1009.1" cy="885.7" r="1.5"/></g>
</g>
<path d="M975 895 H1281" stroke="#222" stroke-width="2" fill="none"/>
<path d="M977 232.5 h3 M977 322.5 h3 M977 396.5 h3 M977 513.5 h3 M977 604.5 h3 M977 677.5 h3 M977 740.5 h3 M977 794.5 h3 M977 842.5 h3 M977 885.5 h3" stroke="#666" stroke-width="1" fill="none"/>
<text x="1076.5" y="921" font-size="15" fill="#222" stroke="#222" stroke-width="0.45" text-anchor="middle">50</text>
<text x="1177.5" y="921" font-size="15" fill="#222" stroke="#222" stroke-width="0.45" text-anchor="middle">100</text>
<text x="1128" y="952" font-size="15.7" fill="#444" text-anchor="middle">Windspeed (kn)</text>
<rect x="977" y="113" width="308" height="32" fill="#c0c0c0" fill-opacity="0.88" stroke="#000" stroke-width="2"/>
<path d="M983 122 L988 117.5 L1000.5 138 L1011.5 121 L1024 138 L1034 124" stroke="#000" stroke-width="1.6" fill="none"/>
<text x="1045" y="137" font-size="26.5" fill="#000" textLength="239" lengthAdjust="spacingAndGlyphs">Windgeschwindigkeit</text>
</svg>
<div class="t" style="left:39px;top:964px;font-weight:bold;font-size:12px;letter-spacing:-0.06px">N 39°05 O 009°41, Di 12 Okt 2010 12:00 (COSMO_S6.6_Europe (G) , 12 Okt 2010 06 UTC +6h)</div>
<div class="t" style="left:423px;top:980px;letter-spacing:0.08px">305hPa&nbsp;&nbsp; 30'323ft (9'242 m) MSL&nbsp;&nbsp; 30'317ft (9'241 m) GND&nbsp;&nbsp; Windgeschwindigkeit: 37kn</div>
<div class="t" style="left:612px;top:996px">[305hPa&nbsp;&nbsp; FL 297&nbsp;&nbsp; ]</div>
<!-- bottom bar -->
<div class="cb k" style="left:5px;top:1023px"></div>
<div class="a" style="left:28px;top:1023px;width:11px;height:11px;border-radius:7px;border:1px solid #8e8e86;background:#fff;box-shadow:1px 1px 1px #c8c8c0"></div>
<div class="a" style="left:32px;top:1027px;width:5px;height:5px;border-radius:3px;background:#000"></div>
<div class="t" style="left:51px;top:1024px">N 39°05 O 009°41</div>
<div class="a" style="left:163px;top:1019px;width:143px;height:22px;background:#f6f61e;border:1px solid #e6e620;box-sizing:border-box"></div>
<div class="t" style="left:167px;top:1024px">Di 12 Okt 2010 12:00</div>
<svg class="a" style="left:289px;top:1026px" width="11" height="7"><path d="M0.5 0.5 H10 L5.25 6.5Z" fill="#000"/></svg>
<div class="btn " style="left:318.5px;top:1015.5px;width:27px;height:27px"><svg width="27" height="27" viewBox="0 0 27 27"><path d="M21.5 3 L21.5 24 L4 13.5Z" fill="#989898" stroke="#7c7c7c" stroke-width="0.8"/></svg></div>
<div class="a" style="left:350px;top:1020px;width:69px;height:19px;border:1px solid #e0e0da;background:#f0f0ea;"></div><div class="t" style="left:352px;top:1024px;letter-spacing:0.25px">Nächster</div><svg class="a" style="left:404px;top:1026px" width="11" height="7"><path d="M0.5 0.5 H10 L5.25 6.5Z" fill="#000"/></svg>
<div class="btn " style="left:422px;top:1015.5px;width:27px;height:27px"><svg width="27" height="27" viewBox="0 0 27 27"><path d="M5.5 3 L5.5 24 L23 13.5Z" fill="#989898" stroke="#7c7c7c" stroke-width="0.8"/></svg></div>
<div class="btn " style="left:464px;top:1015.5px;width:27px;height:27px"><svg width="27" height="27" viewBox="0 0 27 27"><path d="M8.6 10.5 L10 21.5 H17.6 L19 10.5Z" fill="#68806a" stroke="#141c14" stroke-width="1.1"/><path d="M11.3 12V20M13.8 12V20M16.3 12V20" stroke="#9cb09c" stroke-width="0.9"/><ellipse cx="13.8" cy="9.4" rx="6.4" ry="2.3" fill="#94aa94" stroke="#141c14" stroke-width="1.1"/><path d="M12 7.2 C12 6.2 15.6 6.2 15.6 7.2" stroke="#141c14" stroke-width="1" fill="none"/></svg></div>
<div class="btn on" style="left:506px;top:1015.5px;width:27px;height:27px"><svg width="27" height="27" viewBox="0 0 27 27"><circle cx="22.4" cy="9" r="4.4" fill="#6078c0" stroke="#8890b0" stroke-width="0.6"/><circle cx="21.4" cy="7.8" r="1.6" fill="#c8c890" opacity="0.8"/><g transform="translate(0.7 0.7)"><path d="M7 5L5.5 23M11 4.5L9.5 23M15 4L13.5 22.5M19 4L17.5 22M4 9.5L21 8M4 13.5L21 12M4 17.5L20 16M4 21.5L20 20" stroke="#202020" stroke-width="1.2" opacity="0.7"/></g><path d="M7 5L5.5 23M11 4.5L9.5 23M15 4L13.5 22.5M19 4L17.5 22M4 9.5L21 8M4 13.5L21 12M4 17.5L20 16M4 21.5L20 20" stroke="#f4f480" stroke-width="1.5"/></svg></div>
<div class="btn " style="left:548px;top:1015.5px;width:42px;height:27px"><svg width="42" height="27" viewBox="0 0 42 27"><rect x="8.8" y="1.3" width="23.8" height="23.8" fill="#c8c8c8"/><path d="M13 1.3V25M20.1 1.3V25M27.3 1.3V25M8.8 4.3H32.6M8.8 10.9H32.6M8.8 18.6H32.6M8.8 22.8H32.6" stroke="#fff" stroke-width="1.3"/><path d="M13 3V24M20.1 3V24M27.3 3V24" stroke="#202020" stroke-width="0.5"/><path d="M9.9 10.9 L17.7 6.1 V15.6Z M32 10.9 L23.1 6.1 V15.6Z" fill="#1020f0"/><g fill="none" stroke="#f01010" stroke-width="1.5"><circle cx="11.6" cy="18.2" r="1.8"/><circle cx="16" cy="18.2" r="1.8"/><circle cx="20.4" cy="18.2" r="1.8"/><circle cx="11.6" cy="22" r="1.8"/><circle cx="16" cy="22" r="1.8"/><circle cx="20.4" cy="22" r="1.8"/></g><path d="M33.8 4.3 V22.8 L39.7 13.5Z" fill="#000"/></svg></div>
<div class="btn " style="left:603.8px;top:1015.5px;width:42px;height:27px"><svg width="42" height="27" viewBox="0 0 42 27"><path d="M8.1 4.3 V22.8 L2.2 13.5Z" fill="#000"/><rect x="8.7" y="0.7" width="23.8" height="24.3" fill="#000"/><path d="M13.5 0.7V25M20.6 0.7V25M27.8 0.7V25M8.7 4.3H32.5M8.7 10.9H32.5M8.7 18.6H32.5M8.7 22.8H32.5" stroke="#fff" stroke-width="1.3"/><path d="M9.9 10.9 L17.7 6.1 V15.6Z M32 10.9 L23 6.1 V15.6Z" fill="#1020f0"/><circle cx="17.7" cy="18.6" r="3" fill="#d0d0d0" stroke="#fff" stroke-width="0.6"/><path d="M16.8 17 L19.2 18.6 L16.8 20.2" fill="none" stroke="#606060" stroke-width="0.8"/></svg></div>
<div class="t" style="left:665px;top:1024px">COSMO_S6.6_Europe (G) , 12 Okt 2010 06 UTC +6h</div>
<!-- right panel -->
<div id="rp" class="a"><div id="rp1" class="a"><div id="rp2" class="a"><div id="rp2b" class="a"><div id="rp3" class="a"></div></div></div></div></div>
<div class="sec" style="top:98px;letter-spacing:0.081px"><i class="p"></i>Temp</div>
<div class="sec" style="top:126px;letter-spacing:0.153px"><i></i>Wolkenparameter</div>
<div class="sec" style="top:204px;letter-spacing:0.163px"><i></i>Konvektion</div>
<div class="sec" style="top:454px;letter-spacing:0.040px"><i></i>Gewitter</div>
<div class="sec" style="top:755px;letter-spacing:0.122px"><i></i>Gewittergefahren</div>
<div class="sec" style="top:855px;letter-spacing:-0.003px"><i></i>Luftfahrt</div>
<div class="sec" style="top:922px;letter-spacing:0.166px"><i class="p"></i>Umwelt</div>
<div class="row" style="top:149px;height:32px"><div class="l"><span style="letter-spacing:0.176px">Schichtwolken</span></div><div class="v " style="padding-top:-0.5px"><span style="letter-spacing:0.123px;padding-right:5px">5&nbsp; 1'002-945 hPa</span><span style="letter-spacing:0.138px;padding-right:5px">5&nbsp; 711-695 hPa</span></div><div class="c"><div class="cb" style="left:7px;top:9px"></div></div><div class="b"><em>i</em></div></div>
<div class="row" style="top:181px;height:18px"><div class="l"><span style="letter-spacing:0.104px">Niederschlagbares Wass...</span></div><div class="v " style="padding-top:0.5px"><span style="letter-spacing:0.045px">37.1 mm</span></div><div class="c"></div><div class="b"><em>i</em></div></div>
<div class="row" style="top:227px;height:18px"><div class="l"><span style="letter-spacing:0.134px">Auslösetemperatur</span></div><div class="v " style="padding-top:0.5px"><span style="letter-spacing:0.171px">27 °C</span></div><div class="c"></div><div class="b"><em>i</em></div></div>
<div class="row" style="top:245px;height:48px"><div class="l"><span style="letter-spacing:0.221px">HKN</span></div><div class="v " style="padding-top:-0.5px"><span style="letter-spacing:0.185px">942 hPa</span><span style="letter-spacing:-0.004px">18 hft</span><span style="letter-spacing:0.121px">17.6 °C</span></div><div class="c"><div class="cb k" style="left:7px;top:17px"></div></div><div class="b"><em>i</em></div></div>
<div class="row" style="top:293px;height:48px"><div class="l"><span style="letter-spacing:-0.000px">NFK</span></div><div class="v " style="padding-top:-0.5px"><span style="letter-spacing:0.185px">803 hPa</span><span style="letter-spacing:-0.004px">62 hft</span><span style="letter-spacing:0.121px">11.5 °C</span></div><div class="c"><div class="cb" style="left:7px;top:17px"></div></div><div class="b"><em>i</em></div></div>
<div class="row" style="top:341px;height:21px"><div class="l"><span style="letter-spacing:-0.002px">CAPE NFK</span></div><div class="v or" style="padding-top:2.0px"><span style="letter-spacing:0.067px">1'229 J/kg</span></div><div class="c"><div class="cb k" style="left:7px;top:3px"></div></div><div class="b"><em>i</em></div></div>
<div class="row" style="top:362px;height:48px"><div class="l"><span style="letter-spacing:0.109px">KKN</span></div><div class="v " style="padding-top:-0.5px"><span style="letter-spacing:0.185px">883 hPa</span><span style="letter-spacing:-0.004px">36 hft</span><span style="letter-spacing:0.121px">16.6 °C</span></div><div class="c"><div class="cb k" style="left:7px;top:17px"></div></div><div class="b"><em>i</em></div></div>
<div class="row" style="top:410px;height:20px"><div class="l"><span style="letter-spacing:0.039px">CAPE KKN</span></div><div class="v or" style="padding-top:1.5px"><span style="letter-spacing:0.067px">2'235 J/kg</span></div><div class="c"><div class="cb k" style="left:7px;top:3px"></div></div><div class="b"><em>i</em></div></div>
<div class="row" style="top:430px;height:18px"><div class="l"><span style="letter-spacing:0.140px">Konvektive Inhibition</span></div><div class="v " style="padding-top:0.5px"><span style="letter-spacing:0.039px">-65 J/kg</span></div><div class="c"></div><div class="b"><em>i</em></div></div>
<div class="row" style="top:477px;height:18px"><div class="l"><span style="letter-spacing:0.039px">KO-Index</span></div><div class="v rd" style="padding-top:0.5px"><span style="letter-spacing:0.165px">-7</span></div><div class="c"></div><div class="b"><em>i</em></div></div>
<div class="row" style="top:495px;height:18px"><div class="l"><span style="letter-spacing:0.050px">Totals-Totals</span></div><div class="v gn" style="padding-top:0.5px"><span style="letter-spacing:0.326px">50</span></div><div class="c"></div><div class="b"><em>i</em></div></div>
<div class="row" style="top:513px;height:18px"><div class="l"><span style="letter-spacing:0.082px">Cross-Totals</span></div><div class="v gn" style="padding-top:0.5px"><span style="letter-spacing:0.326px">23</span></div><div class="c"></div><div class="b"><em>i</em></div></div>
<div class="row" style="top:531px;height:18px"><div class="l"><span style="letter-spacing:0.087px">Vertical-Totals</span></div><div class="v gn" style="padding-top:0.5px"><span style="letter-spacing:0.326px">27</span></div><div class="c"></div><div class="b"><em>i</em></div></div>
<div class="row" style="top:549px;height:18px"><div class="l"><span style="letter-spacing:0.092px">K-Index</span></div><div class="v or" style="padding-top:0.5px"><span style="letter-spacing:0.326px">35</span></div><div class="c"></div><div class="b"><em>i</em></div></div>
<div class="row" style="top:567px;height:18px"><div class="l"><span style="letter-spacing:0.093px">Modifizierter K-Index</span></div><div class="v rd" style="padding-top:0.5px"><span style="letter-spacing:0.326px">48</span></div><div class="c"></div><div class="b"><em>i</em></div></div>
<div class="row" style="top:585px;height:18px"><div class="l"><span style="letter-spacing:0.080px">Lifted Index</span></div><div class="v or" style="padding-top:0.5px"><span style="letter-spacing:0.165px">-4</span></div><div class="c"></div><div class="b"><em>i</em></div></div>
<div class="row" style="top:603px;height:18px"><div class="l"><span style="letter-spacing:0.130px">Showalter Index</span></div><div class="v gn" style="padding-top:0.5px"><span style="letter-spacing:0.165px">-1</span></div><div class="c"></div><div class="b"><em>i</em></div></div>
<div class="row" style="top:621px;height:18px"><div class="l"><span style="letter-spacing:0.107px">Steinbeck Index</span></div><div class="v rd" style="padding-top:0.5px"><span style="letter-spacing:0.326px">1</span></div><div class="c"></div><div class="b"><em>i</em></div></div>
<div class="row" style="top:639px;height:18px"><div class="l"><span style="letter-spacing:0.092px">S-Index</span></div><div class="v rd" style="padding-top:0.5px"><span style="letter-spacing:0.326px">48</span></div><div class="c"></div><div class="b"><em>i</em></div></div>
<div class="row" style="top:657px;height:18px"><div class="l"><span style="letter-spacing:0.151px">Similae Index</span></div><div class="v rd" style="padding-top:0.5px"><span style="letter-spacing:0.326px">7</span></div><div class="c"></div><div class="b"><em>i</em></div></div>
<div class="row" style="top:675px;height:18px"><div class="l"><span style="letter-spacing:0.147px">Bulk Richardson Zahl</span></div><div class="v " style="padding-top:0.5px"><span style="letter-spacing:0.000px"></span></div><div class="c"></div><div class="b"><em>i</em></div></div>
<div class="row" style="top:693px;height:18px"><div class="l"><span style="letter-spacing:-0.002px">SWEAT-Index</span></div><div class="v bl" style="padding-top:0.5px"><span style="letter-spacing:0.326px">226</span></div><div class="c"></div><div class="b"><em>i</em></div></div>
<div class="row" style="top:711px;height:18px"><div class="l"><span style="letter-spacing:0.194px">Energiehelizitätsindex</span></div><div class="v " style="padding-top:0.5px"><span style="letter-spacing:0.326px">1</span></div><div class="c"></div><div class="b"><em>i</em></div></div>
<div class="row" style="top:729px;height:21px"><div class="l"><span style="letter-spacing:0.120px">Sturmrelative Helizitä</span></div><div class="v gn" style="padding-top:2.0px"><span style="letter-spacing:0.107px">142 m<sup>2</sup>/s<sup>2</sup></span></div><div class="c"></div><div class="b"><em>i</em></div></div>
<div class="row" style="top:778px;height:18px"><div class="l"><span style="letter-spacing:0.105px">Hageldurchmesser (Moor...</span></div><div class="v " style="padding-top:0.5px"><span style="letter-spacing:-0.002px">1.1 cm</span></div><div class="c"></div><div class="b"><em>i</em></div></div>
<div class="row" style="top:796px;height:18px"><div class="l"><span style="letter-spacing:0.058px">WINDEX Böen</span></div><div class="v " style="padding-top:0.5px"><span style="letter-spacing:0.129px">36 kn</span></div><div class="c"></div><div class="b"><em>i</em></div></div>
<div class="row" style="top:814px;height:18px"><div class="l"><span style="letter-spacing:0.176px">Nakamura Böen</span></div><div class="v " style="padding-top:0.5px"><span style="letter-spacing:0.129px">38 kn</span></div><div class="c"></div><div class="b"><em>i</em></div></div>
<div class="row" style="top:832px;height:18px"><div class="l"><span style="letter-spacing:0.063px">Faust Böen</span></div><div class="v " style="padding-top:0.5px"><span style="letter-spacing:0.129px">37 kn</span></div><div class="c"></div><div class="b"><em>i</em></div></div>
<div class="row" style="top:878px;height:18px"><div class="l"><span style="letter-spacing:0.218px">Vereisung</span></div><div class="v " style="padding-top:0.5px"><span style="letter-spacing:-0.001px">N/A</span></div><div class="c"></div><div class="b"><em>i</em></div></div>
<div class="row" style="top:896px;height:21px"><div class="l"><span style="letter-spacing:-0.000px">CAT</span></div><div class="v " style="padding-top:2.0px"><span style="letter-spacing:0.100px;padding-right:5px">N/A&nbsp; 150-100 hPa</span></div><div class="c"><div class="cb" style="left:7px;top:3px"></div></div><div class="b"><em>i</em></div></div>

</div>
</body></html>
